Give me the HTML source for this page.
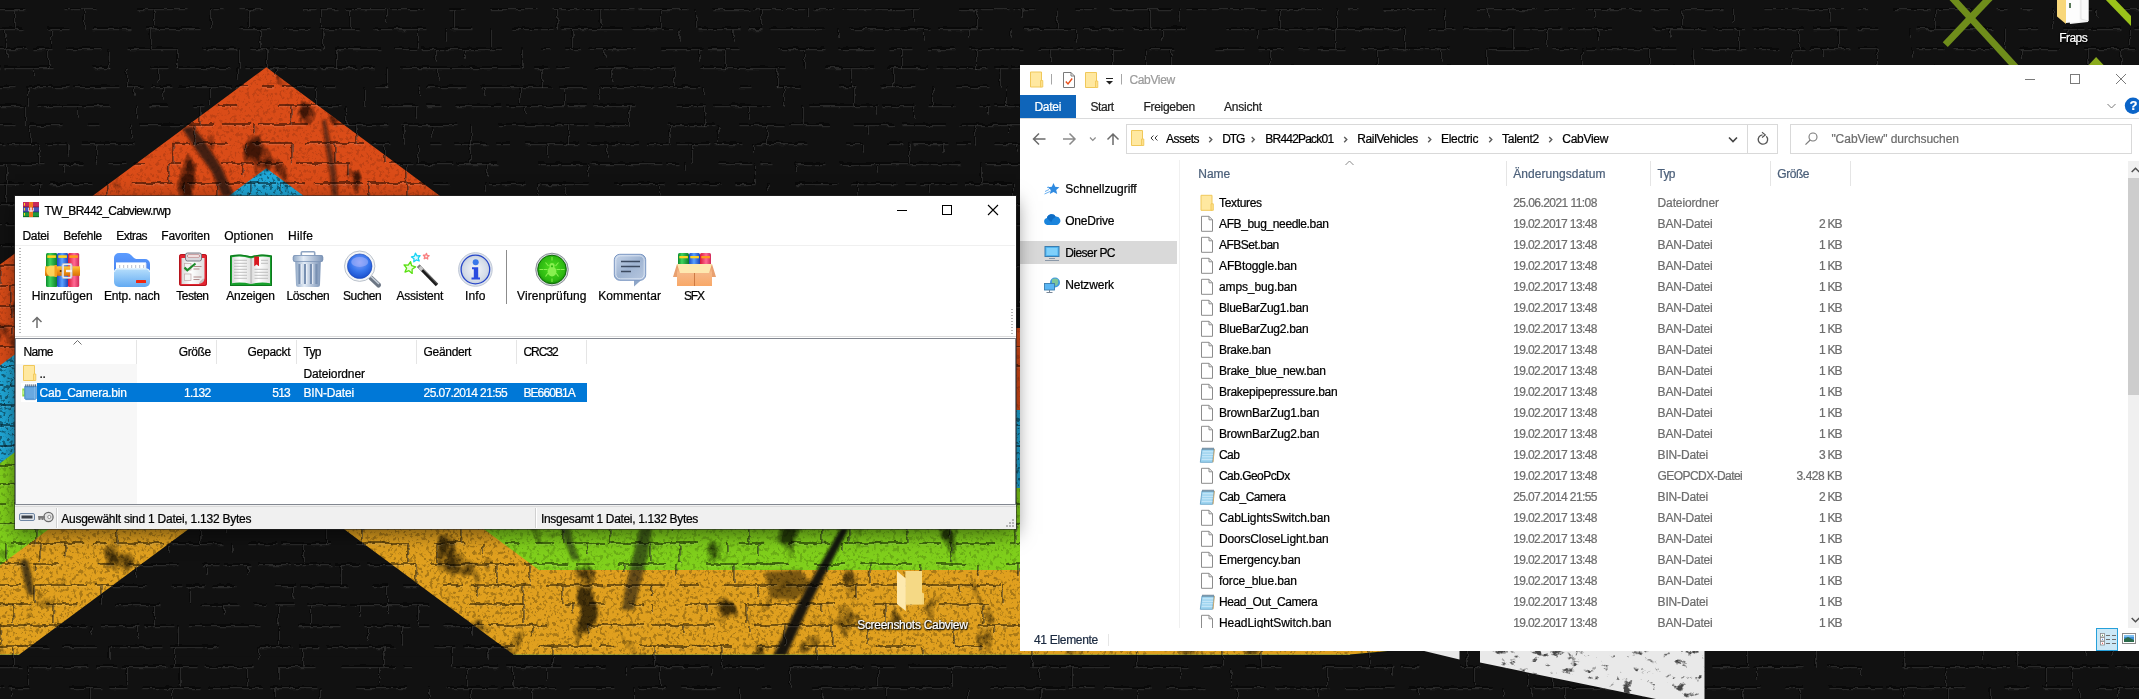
<!DOCTYPE html>
<html lang="de"><head><meta charset="utf-8"><title>Desktop</title>
<style>
html,body{margin:0;padding:0;background:#0f0f0f;}
body{width:2139px;height:699px;overflow:hidden;position:relative;font-family:"Liberation Sans", sans-serif;}
.a{position:absolute;}
.t{position:absolute;white-space:pre;font-family:"Liberation Sans", sans-serif;-webkit-text-stroke:.22px currentColor;}
svg{position:absolute;overflow:visible;}
</style></head><body>
<svg class="a" style="left:0;top:0" width="2139" height="699" viewBox="0 0 2139 699">
<defs>
<filter id="blot" x="0" y="0" width="100%" height="100%" color-interpolation-filters="sRGB">
 <feTurbulence type="fractalNoise" baseFrequency="0.03 0.022" numOctaves="5" seed="7" result="n"/>
 <feColorMatrix in="n" type="matrix" values="0 0 0 0 0  0 0 0 0 0  0 0 0 0 0  4.5 3.5 0 0 -4.75" result="a"/>
 <feComposite in="a" in2="SourceGraphic" operator="in"/>
</filter>
<filter id="wob" x="0" y="0" width="100%" height="100%">
 <feTurbulence type="fractalNoise" baseFrequency="0.11 0.13" numOctaves="2" seed="9" result="n"/>
 <feDisplacementMap in="SourceGraphic" in2="n" scale="5" xChannelSelector="R" yChannelSelector="G"/>
</filter>
<filter id="grain" x="0" y="0" width="100%" height="100%" color-interpolation-filters="sRGB">
 <feTurbulence type="fractalNoise" baseFrequency="0.3 0.27" numOctaves="3" seed="21" result="n"/>
 <feColorMatrix in="n" type="matrix" values="0 0 0 0 0  0 0 0 0 0  0 0 0 0 0  6 5 0 0 -5.75" result="a"/>
 <feComposite in="a" in2="SourceGraphic" operator="in"/>
</filter>
<filter id="blur3"><feGaussianBlur stdDeviation="1.6"/></filter>
<clipPath id="wclip"><path d="M1480 645V662.5L1656 699H1704.5V645Z"/></clipPath>
<filter id="blot2" x="0" y="0" width="100%" height="100%" color-interpolation-filters="sRGB">
 <feTurbulence type="fractalNoise" baseFrequency="0.09 0.12" numOctaves="4" seed="4" result="n"/>
 <feColorMatrix in="n" type="matrix" values="0 0 0 0 0  0 0 0 0 0  0 0 0 0 0  6 5 0 0 -6.3" result="a"/>
 <feComposite in="a" in2="SourceGraphic" operator="in"/>
</filter>
<clipPath id="bands"><polygon points="0.0,264.5 266.3,67.2 618.3,328.0 1392.0,328.0 1352.0,654.5 0.0,654.5"/></clipPath>
</defs>
<rect width="2139" height="699" fill="#111"/>
<clipPath id="co"><polygon points="0.0,264.5 266.3,67.2 618.3,328.0 1392.0,328.0 1392.0,654.5 0.0,654.5"/></clipPath><polygon points="0.0,264.5 266.3,67.2 618.3,328.0 1392.0,328.0 1392.0,654.5 0.0,654.5" fill="#da4c18"/><g clip-path="url(#co)"><rect width="1400" height="699" fill="#000" filter="url(#grain)" opacity="0.12"/></g>
<clipPath id="cb"><polygon points="0.0,365.5 266.3,168.2 592.6,410.0 1392.0,410.0 1392.0,654.5 0.0,654.5"/></clipPath><polygon points="0.0,365.5 266.3,168.2 592.6,410.0 1392.0,410.0 1392.0,654.5 0.0,654.5" fill="#20a8d8"/><g clip-path="url(#cb)"><rect width="1400" height="699" fill="#000" filter="url(#grain)" opacity="0.4"/></g>
<clipPath id="cg"><polygon points="0.0,463.3 266.3,266.0 565.9,488.0 1392.0,488.0 1392.0,654.5 0.0,654.5"/></clipPath><polygon points="0.0,463.3 266.3,266.0 565.9,488.0 1392.0,488.0 1392.0,654.5 0.0,654.5" fill="#80d01c"/><g clip-path="url(#cg)"><rect width="1400" height="699" fill="#000" filter="url(#grain)" opacity="0.16"/></g>
<clipPath id="cy"><polygon points="0.0,565.3 266.3,368.0 538.9,570.0 1392.0,570.0 1392.0,651.0 1350.0,654.5 0.0,654.5"/></clipPath><polygon points="0.0,565.3 266.3,368.0 538.9,570.0 1392.0,570.0 1392.0,651.0 1350.0,654.5 0.0,654.5" fill="#e0a01f"/><g clip-path="url(#cy)"><rect width="1400" height="699" fill="#000" filter="url(#grain)" opacity="0.24"/></g>
<g clip-path="url(#bands)"><rect width="1400" height="699" fill="#000" filter="url(#blot)" opacity=".7"/>
<g filter="url(#blur3)" fill="#0c0c0c">
<path d="M841 528L800 600L773 656L786 656L812 600L849 528Z" opacity=".95"/><path d="M765 572L800 570L812 585L795 600L770 598Z" opacity=".45"/>
<path d="M182 128L196 150L212 172L222 196L234 196L222 168L204 140L192 126Z" opacity=".75"/>
<path d="M322 120L326 150L330 175L332 196L338 196L336 170L330 140L326 120Z" opacity=".6"/>
<path d="M640 528L632 560L625 590L622 610L634 610L640 585L648 555L652 528Z" opacity=".6"/>
<path d="M20 560L24 580L28 595L34 595L32 578L28 560Z" opacity=".7"/>
<path d="M560 528L566 545L572 560L580 560L574 545L570 528Z" opacity=".55"/>
</g>
</g>
<polygon points="513.3,654.5 266.3,471.5 19.3,654.5 19.3,656.5 513.3,656.5" fill="#111" />
<polygon points="1350.0,654.5 1393.0,650.5 1393.0,655.5 1350.0,655.5" fill="#111" />
<g filter="url(#wob)"><path d="M-1 8.0h26M65 8.0h32M137 8.0h51M213 8.0h11M238 8.0h25M303 8.0h13M320 8.0h17M345 8.0h40M389 8.0h34M448 8.0h16M489 8.0h25M514 8.0h23M551 8.0h27M582 8.0h34M620 8.0h14M638 8.0h49M712 8.0h38M754 8.0h18M772 8.0h10M786 8.0h23M813 8.0h20M841 8.0h30M875 8.0h44M959 8.0h50M1013 8.0h21M1074 8.0h22M1110 8.0h29M1139 8.0h33M1186 8.0h20M1210 8.0h26M1236 8.0h31M1275 8.0h48M1348 8.0h10M1383 8.0h53M1476 8.0h31M1507 8.0h29M1544 8.0h29M1587 8.0h54M1649 8.0h21M1684 8.0h40M1764 8.0h21M1785 8.0h26M1811 8.0h32M1857 8.0h11M1893 8.0h36M1937 8.0h34M1996 8.0h10M2020 8.0h12M2072 8.0h21M2118 8.0h22M15 8.0v19M84 8.0v19M154 8.0v19M211 8.0v19M249 8.0v19M321 8.0v19M350 8.0v19M386 8.0v12M454 8.0v19M557 8.0v19M600 8.0v19M660 8.0v19M696 8.0v19M761 8.0v19M808 8.0v8M913 8.0v12M977 8.0v19M1022 8.0v8M1057 8.0v19M1150 8.0v19M1179 8.0v12M1280 8.0v19M1337 8.0v19M1445 8.0v19M1488 8.0v8M1594 8.0v8M1682 8.0v19M1733 8.0v12M1830 8.0v12M1935 8.0v19M1973 8.0v12M2053 8.0v19M2097 8.0v8M-16 28.0h39M48 28.0h20M93 28.0h39M146 28.0h54M240 28.0h30M284 28.0h27M319 28.0h40M373 28.0h19M392 28.0h34M451 28.0h21M512 28.0h41M561 28.0h21M582 28.0h41M631 28.0h42M698 28.0h42M748 28.0h14M770 28.0h54M849 28.0h52M901 28.0h29M938 28.0h45M1023 28.0h52M1083 28.0h41M1132 28.0h54M1226 28.0h28M1262 28.0h51M1317 28.0h47M1364 28.0h40M1429 28.0h26M1463 28.0h52M1523 28.0h39M1570 28.0h42M1652 28.0h53M1713 28.0h32M1753 28.0h51M1812 28.0h36M1856 28.0h21M1917 28.0h38M1963 28.0h31M2019 28.0h19M2063 28.0h20M2087 28.0h33M2134 28.0h28M5 28.0v19M51 28.0v19M150 28.0v19M260 28.0v19M323 28.0v19M418 28.0v19M446 28.0v12M491 28.0v19M572 28.0v19M680 28.0v12M733 28.0v12M838 28.0v8M923 28.0v12M969 28.0v8M1011 28.0v8M1076 28.0v12M1162 28.0v12M1257 28.0v8M1335 28.0v19M1404 28.0v19M1513 28.0v19M1547 28.0v19M1598 28.0v12M1670 28.0v8M1739 28.0v19M1799 28.0v19M1838 28.0v19M1910 28.0v8M2005 28.0v19M2068 28.0v8M2130 28.0v19M-2 48.0h28M34 48.0h18M66 48.0h36M127 48.0h51M203 48.0h33M250 48.0h19M273 48.0h48M335 48.0h46M395 48.0h22M421 48.0h48M469 48.0h32M541 48.0h10M565 48.0h16M589 48.0h46M660 48.0h44M708 48.0h30M778 48.0h46M838 48.0h37M889 48.0h24M927 48.0h28M969 48.0h55M1038 48.0h34M1076 48.0h48M1149 48.0h26M1215 48.0h29M1258 48.0h26M1298 48.0h11M1317 48.0h29M1360 48.0h28M1392 48.0h40M1432 48.0h17M1489 48.0h49M1552 48.0h25M1585 48.0h12M1601 48.0h35M1636 48.0h40M1701 48.0h45M1754 48.0h25M1793 48.0h12M1809 48.0h41M1858 48.0h19M1917 48.0h28M1953 48.0h41M2019 48.0h40M2084 48.0h51M7 48.0v8M48 48.0v19M109 48.0v19M177 48.0v19M239 48.0v19M267 48.0v19M336 48.0v19M436 48.0v12M465 48.0v8M522 48.0v19M605 48.0v8M699 48.0v12M725 48.0v19M804 48.0v19M902 48.0v19M976 48.0v19M1051 48.0v12M1113 48.0v19M1146 48.0v19M1171 48.0v19M1270 48.0v19M1377 48.0v19M1441 48.0v12M1487 48.0v19M1582 48.0v19M1649 48.0v19M1693 48.0v19M1792 48.0v19M1823 48.0v8M1877 48.0v19M1912 48.0v8M2021 48.0v8M2088 48.0v19M2121 48.0v19M-17 67.0h17M4 67.0h49M93 67.0h17M150 67.0h18M176 67.0h55M245 67.0h19M268 67.0h49M321 67.0h36M361 67.0h14M400 67.0h23M423 67.0h45M468 67.0h52M534 67.0h14M556 67.0h13M594 67.0h46M640 67.0h35M700 67.0h18M718 67.0h37M755 67.0h30M825 67.0h48M887 67.0h41M936 67.0h51M995 67.0h13M1012 67.0h54M1074 67.0h19M1118 67.0h50M1208 67.0h42M1258 67.0h45M1328 67.0h49M1381 67.0h26M1407 67.0h45M1456 67.0h26M1490 67.0h43M1537 67.0h25M1570 67.0h39M1649 67.0h34M1687 67.0h18M1745 67.0h11M1796 67.0h31M1827 67.0h46M1913 67.0h12M1925 67.0h17M1967 67.0h48M2029 67.0h25M2068 67.0h39M2121 67.0h30M33 67.0v8M127 67.0v19M158 67.0v12M237 67.0v12M276 67.0v8M386 67.0v19M438 67.0v12M542 67.0v19M612 67.0v12M674 67.0v19M777 67.0v19M851 67.0v19M893 67.0v19M1000 67.0v19M1105 67.0v19M1176 67.0v19M1205 67.0v19M1303 67.0v12M1351 67.0v19M1384 67.0v8M1413 67.0v8M1461 67.0v12M1511 67.0v8M1598 67.0v19M1707 67.0v19M1732 67.0v19M1817 67.0v19M1921 67.0v19M1987 67.0v19M2071 67.0v8M2120 67.0v12M-18 86.0h33M29 86.0h40M73 86.0h45M126 86.0h17M151 86.0h20M179 86.0h53M236 86.0h12M262 86.0h12M282 86.0h33M323 86.0h13M376 86.0h11M427 86.0h39M480 86.0h19M499 86.0h52M559 86.0h28M601 86.0h53M658 86.0h20M678 86.0h22M740 86.0h11M776 86.0h24M840 86.0h15M880 86.0h35M955 86.0h33M1028 86.0h29M1061 86.0h39M1108 86.0h28M1136 86.0h55M1205 86.0h20M1229 86.0h21M1290 86.0h23M1313 86.0h51M1389 86.0h37M1466 86.0h27M1493 86.0h39M1532 86.0h38M1610 86.0h36M1650 86.0h12M1662 86.0h45M1732 86.0h46M1786 86.0h16M1842 86.0h14M1860 86.0h41M1901 86.0h40M1941 86.0h53M1998 86.0h51M2049 86.0h41M2104 86.0h13M2117 86.0h26M28 86.0v19M134 86.0v8M163 86.0v12M210 86.0v19M316 86.0v19M365 86.0v19M419 86.0v8M484 86.0v8M520 86.0v19M565 86.0v19M599 86.0v12M703 86.0v8M784 86.0v19M854 86.0v19M933 86.0v19M1006 86.0v19M1111 86.0v12M1137 86.0v19M1219 86.0v12M1314 86.0v8M1356 86.0v19M1442 86.0v8M1500 86.0v19M1565 86.0v12M1606 86.0v19M1641 86.0v19M1697 86.0v8M1776 86.0v19M1886 86.0v12M1946 86.0v8M2034 86.0v12M2065 86.0v12M2126 86.0v19M-7 105.0h30M37 105.0h45M82 105.0h28M150 105.0h18M193 105.0h11M218 105.0h19M277 105.0h51M328 105.0h13M381 105.0h37M426 105.0h16M456 105.0h45M505 105.0h30M535 105.0h29M568 105.0h18M594 105.0h41M675 105.0h30M713 105.0h12M725 105.0h44M809 105.0h45M854 105.0h11M865 105.0h13M882 105.0h32M928 105.0h26M979 105.0h11M994 105.0h43M1051 105.0h18M1077 105.0h22M1107 105.0h32M1139 105.0h20M1184 105.0h49M1237 105.0h16M1261 105.0h43M1329 105.0h20M1389 105.0h55M1448 105.0h38M1500 105.0h37M1537 105.0h31M1576 105.0h38M1618 105.0h39M1682 105.0h37M1723 105.0h38M1761 105.0h52M1817 105.0h44M1875 105.0h41M1941 105.0h10M1951 105.0h18M1983 105.0h53M2036 105.0h23M2059 105.0h12M2096 105.0h25M2135 105.0h55M25 105.0v19M77 105.0v12M137 105.0v12M200 105.0v19M291 105.0v19M346 105.0v19M416 105.0v12M525 105.0v8M629 105.0v19M705 105.0v19M748 105.0v12M803 105.0v19M876 105.0v8M913 105.0v12M988 105.0v8M1049 105.0v12M1115 105.0v19M1200 105.0v19M1304 105.0v8M1354 105.0v19M1380 105.0v8M1470 105.0v19M1570 105.0v19M1618 105.0v19M1645 105.0v19M1673 105.0v19M1737 105.0v19M1811 105.0v19M1896 105.0v19M1972 105.0v19M2071 105.0v19M-3 124.0h19M30 124.0h33M88 124.0h11M139 124.0h43M186 124.0h28M222 124.0h14M236 124.0h15M259 124.0h49M333 124.0h55M402 124.0h29M431 124.0h27M498 124.0h25M523 124.0h12M535 124.0h52M595 124.0h32M667 124.0h48M740 124.0h45M789 124.0h40M854 124.0h15M869 124.0h25M902 124.0h44M960 124.0h35M995 124.0h52M1061 124.0h34M1099 124.0h51M1175 124.0h23M1238 124.0h49M1295 124.0h34M1337 124.0h16M1393 124.0h45M1478 124.0h55M1541 124.0h25M1566 124.0h23M1597 124.0h29M1634 124.0h49M1683 124.0h20M1703 124.0h50M1767 124.0h21M1792 124.0h51M1843 124.0h46M1914 124.0h50M2004 124.0h44M2088 124.0h36M2138 124.0h24M30 124.0v19M131 124.0v12M194 124.0v19M254 124.0v8M356 124.0v19M404 124.0v19M432 124.0v12M471 124.0v19M568 124.0v19M670 124.0v19M718 124.0v19M767 124.0v19M868 124.0v8M975 124.0v19M1009 124.0v8M1096 124.0v12M1187 124.0v8M1252 124.0v12M1336 124.0v19M1390 124.0v19M1476 124.0v8M1501 124.0v12M1546 124.0v8M1582 124.0v19M1626 124.0v19M1729 124.0v8M1827 124.0v19M1893 124.0v12M1988 124.0v19M2093 124.0v8M-18 143.0h22M8 143.0h30M46 143.0h21M81 143.0h53M174 143.0h15M193 143.0h35M253 143.0h39M306 143.0h10M316 143.0h48M372 143.0h18M430 143.0h10M454 143.0h34M496 143.0h14M524 143.0h55M587 143.0h11M598 143.0h40M646 143.0h22M676 143.0h34M714 143.0h28M756 143.0h51M847 143.0h15M887 143.0h17M912 143.0h36M956 143.0h14M995 143.0h37M1032 143.0h24M1070 143.0h25M1103 143.0h52M1195 143.0h14M1213 143.0h27M1240 143.0h45M1299 143.0h37M1340 143.0h44M1398 143.0h25M1423 143.0h38M1469 143.0h18M1487 143.0h10M1501 143.0h33M1534 143.0h11M1553 143.0h45M1612 143.0h34M1671 143.0h15M1686 143.0h23M1713 143.0h38M1751 143.0h40M1816 143.0h15M1839 143.0h48M1927 143.0h40M1992 143.0h11M2003 143.0h20M2037 143.0h42M2093 143.0h47M39 143.0v19M68 143.0v12M96 143.0v19M173 143.0v19M246 143.0v8M292 143.0v19M335 143.0v19M384 143.0v19M418 143.0v19M470 143.0v19M548 143.0v12M607 143.0v12M692 143.0v19M753 143.0v8M863 143.0v8M909 143.0v19M943 143.0v8M1016 143.0v8M1093 143.0v12M1143 143.0v8M1231 143.0v19M1332 143.0v19M1374 143.0v19M1429 143.0v8M1500 143.0v19M1528 143.0v8M1576 143.0v19M1611 143.0v19M1652 143.0v19M1719 143.0v12M1763 143.0v19M1854 143.0v19M1890 143.0v19M1929 143.0v8M2036 143.0v19M2108 143.0v19M-3 163.0h47M58 163.0h25M108 163.0h18M134 163.0h11M170 163.0h10M220 163.0h34M258 163.0h25M297 163.0h52M389 163.0h13M402 163.0h10M416 163.0h36M456 163.0h42M538 163.0h49M591 163.0h29M620 163.0h42M666 163.0h12M718 163.0h34M760 163.0h11M796 163.0h29M839 163.0h38M877 163.0h51M928 163.0h33M986 163.0h43M1037 163.0h55M1117 163.0h48M1179 163.0h34M1221 163.0h20M1266 163.0h53M1319 163.0h51M1384 163.0h13M1437 163.0h23M1485 163.0h49M1548 163.0h16M1589 163.0h29M1643 163.0h33M1690 163.0h18M1722 163.0h32M1754 163.0h41M1795 163.0h46M1866 163.0h23M1914 163.0h39M1953 163.0h13M2006 163.0h15M2021 163.0h31M2056 163.0h33M2097 163.0h26M2131 163.0h40M7 163.0v19M64 163.0v8M169 163.0v19M243 163.0v12M348 163.0v12M406 163.0v19M487 163.0v12M588 163.0v12M685 163.0v8M755 163.0v19M795 163.0v8M878 163.0v8M981 163.0v19M1089 163.0v8M1117 163.0v19M1194 163.0v8M1271 163.0v19M1374 163.0v19M1477 163.0v19M1530 163.0v19M1569 163.0v8M1669 163.0v8M1699 163.0v8M1782 163.0v19M1890 163.0v19M1984 163.0v8M2091 163.0v19M2131 163.0v19M-6 183.0h29M31 183.0h10M49 183.0h43M132 183.0h41M187 183.0h34M225 183.0h51M280 183.0h26M314 183.0h49M367 183.0h39M406 183.0h19M433 183.0h15M488 183.0h37M539 183.0h49M613 183.0h51M678 183.0h21M703 183.0h18M735 183.0h20M795 183.0h42M851 183.0h46M905 183.0h11M920 183.0h37M965 183.0h46M1025 183.0h42M1092 183.0h23M1140 183.0h25M1205 183.0h20M1239 183.0h45M1292 183.0h30M1330 183.0h49M1379 183.0h22M1409 183.0h37M1454 183.0h43M1505 183.0h41M1586 183.0h55M1681 183.0h15M1696 183.0h54M1750 183.0h31M1781 183.0h16M1837 183.0h28M1890 183.0h21M1911 183.0h44M1969 183.0h21M2030 183.0h31M2101 183.0h26M2127 183.0h36M6 183.0v19M39 183.0v19M107 183.0v19M184 183.0v8M217 183.0v19M250 183.0v12M280 183.0v8M369 183.0v19M407 183.0v19M485 183.0v8M538 183.0v19M566 183.0v19M660 183.0v19M768 183.0v8M858 183.0v19M929 183.0v8M1013 183.0v19M1051 183.0v12M1107 183.0v8M1210 183.0v19M1247 183.0v8M1355 183.0v19M1428 183.0v19M1467 183.0v19M1531 183.0v19M1614 183.0v19M1644 183.0v12M1734 183.0v12M1807 183.0v12M1856 183.0v19M1948 183.0v8M1990 183.0v19M2021 183.0v19M2085 183.0v19M0 204.0h42M50 204.0h28M82 204.0h50M140 204.0h39M193 204.0h35M268 204.0h48M316 204.0h18M359 204.0h22M395 204.0h54M489 204.0h16M519 204.0h24M547 204.0h25M576 204.0h51M627 204.0h38M673 204.0h49M736 204.0h53M793 204.0h54M861 204.0h16M885 204.0h47M940 204.0h50M998 204.0h54M1052 204.0h44M1136 204.0h45M1181 204.0h23M1204 204.0h31M1260 204.0h47M1321 204.0h50M1385 204.0h43M1453 204.0h28M1506 204.0h31M1537 204.0h28M1569 204.0h43M1626 204.0h28M1668 204.0h33M1705 204.0h28M1773 204.0h22M1835 204.0h12M1847 204.0h41M1892 204.0h29M1935 204.0h52M1995 204.0h36M2056 204.0h53M2123 204.0h31M33 204.0v19M99 204.0v19M125 204.0v12M223 204.0v19M331 204.0v8M424 204.0v19M508 204.0v19M538 204.0v12M631 204.0v8M717 204.0v8M767 204.0v12M813 204.0v19M868 204.0v19M976 204.0v8M1050 204.0v19M1157 204.0v12M1264 204.0v19M1290 204.0v12M1399 204.0v12M1498 204.0v8M1587 204.0v19M1667 204.0v19M1731 204.0v12M1768 204.0v19M1864 204.0v19M1959 204.0v19M1991 204.0v19M2083 204.0v8M2126 204.0v19M-20 224.0h22M6 224.0h16M26 224.0h39M79 224.0h40M133 224.0h28M186 224.0h14M200 224.0h54M279 224.0h49M342 224.0h49M416 224.0h48M504 224.0h49M557 224.0h11M608 224.0h38M671 224.0h22M693 224.0h54M755 224.0h22M777 224.0h44M829 224.0h15M848 224.0h24M886 224.0h10M896 224.0h37M933 224.0h29M966 224.0h34M1014 224.0h20M1034 224.0h34M1108 224.0h22M1134 224.0h18M1166 224.0h38M1208 224.0h36M1244 224.0h27M1285 224.0h43M1332 224.0h54M1426 224.0h53M1487 224.0h15M1506 224.0h37M1557 224.0h52M1649 224.0h45M1734 224.0h38M1812 224.0h22M1838 224.0h30M1893 224.0h26M1959 224.0h53M2012 224.0h22M2059 224.0h20M2087 224.0h50M2137 224.0h55M27 224.0v19M70 224.0v19M118 224.0v8M212 224.0v12M291 224.0v8M316 224.0v19M400 224.0v19M435 224.0v19M479 224.0v19M504 224.0v8M606 224.0v19M692 224.0v19M790 224.0v19M857 224.0v19M950 224.0v19M996 224.0v19M1075 224.0v19M1156 224.0v8M1210 224.0v19M1272 224.0v8M1362 224.0v8M1455 224.0v19M1508 224.0v8M1618 224.0v19M1683 224.0v8M1718 224.0v19M1795 224.0v12M1861 224.0v19M1891 224.0v19M1996 224.0v8M2087 224.0v8M0 245.0h15M15 245.0h41M81 245.0h40M125 245.0h38M171 245.0h19M204 245.0h27M256 245.0h38M319 245.0h14M373 245.0h43M420 245.0h28M448 245.0h47M503 245.0h14M531 245.0h28M573 245.0h16M593 245.0h32M665 245.0h37M702 245.0h31M737 245.0h32M809 245.0h16M839 245.0h30M869 245.0h41M918 245.0h12M970 245.0h38M1048 245.0h13M1086 245.0h24M1118 245.0h29M1155 245.0h39M1219 245.0h43M1270 245.0h42M1337 245.0h15M1377 245.0h46M1437 245.0h36M1513 245.0h22M1560 245.0h35M1609 245.0h17M1630 245.0h14M1658 245.0h30M1688 245.0h29M1725 245.0h36M1786 245.0h47M1833 245.0h21M1854 245.0h38M1896 245.0h29M1925 245.0h46M1971 245.0h47M2058 245.0h13M2071 245.0h15M2094 245.0h50M18 245.0v19M127 245.0v12M156 245.0v19M239 245.0v19M284 245.0v19M376 245.0v19M473 245.0v19M557 245.0v19M641 245.0v8M688 245.0v19M773 245.0v19M877 245.0v8M916 245.0v19M975 245.0v19M1043 245.0v8M1117 245.0v19M1199 245.0v19M1240 245.0v12M1334 245.0v19M1404 245.0v19M1452 245.0v12M1529 245.0v8M1605 245.0v19M1662 245.0v12M1766 245.0v12M1846 245.0v19M1937 245.0v19M1977 245.0v19M2050 245.0v8M2099 245.0v12M-13 265.0h54M55 265.0h47M142 265.0h42M184 265.0h17M226 265.0h29M255 265.0h31M294 265.0h49M351 265.0h20M371 265.0h12M387 265.0h41M428 265.0h27M469 265.0h43M516 265.0h12M532 265.0h31M571 265.0h24M603 265.0h39M642 265.0h12M694 265.0h17M715 265.0h16M771 265.0h29M800 265.0h25M825 265.0h50M875 265.0h47M930 265.0h31M969 265.0h36M1009 265.0h27M1044 265.0h14M1072 265.0h21M1097 265.0h41M1138 265.0h29M1181 265.0h24M1205 265.0h45M1254 265.0h34M1328 265.0h46M1374 265.0h28M1416 265.0h12M1468 265.0h26M1494 265.0h39M1537 265.0h17M1594 265.0h15M1613 265.0h30M1651 265.0h25M1701 265.0h41M1742 265.0h54M1836 265.0h10M1871 265.0h30M1926 265.0h35M1969 265.0h30M2007 265.0h50M2061 265.0h47M2116 265.0h38M0 265.0v19M99 265.0v12M153 265.0v8M250 265.0v19M286 265.0v12M341 265.0v12M415 265.0v19M467 265.0v19M509 265.0v12M555 265.0v8M657 265.0v19M760 265.0v19M847 265.0v12M928 265.0v19M985 265.0v8M1086 265.0v12M1186 265.0v19M1280 265.0v8M1386 265.0v19M1483 265.0v19M1574 265.0v8M1637 265.0v8M1733 265.0v12M1835 265.0v12M1943 265.0v19M2016 265.0v19M2101 265.0v19M-10 286.0h18M12 286.0h38M75 286.0h45M160 286.0h22M222 286.0h16M263 286.0h11M288 286.0h21M317 286.0h44M361 286.0h22M391 286.0h55M450 286.0h27M491 286.0h27M518 286.0h50M576 286.0h29M645 286.0h17M687 286.0h25M712 286.0h48M764 286.0h27M805 286.0h38M851 286.0h14M879 286.0h35M928 286.0h19M961 286.0h52M1053 286.0h40M1118 286.0h13M1145 286.0h49M1219 286.0h12M1235 286.0h42M1317 286.0h26M1351 286.0h42M1433 286.0h21M1462 286.0h37M1524 286.0h49M1613 286.0h52M1669 286.0h34M1743 286.0h55M1838 286.0h24M1887 286.0h49M1961 286.0h52M2013 286.0h28M2045 286.0h36M2095 286.0h40M11 286.0v19M97 286.0v19M178 286.0v19M233 286.0v12M299 286.0v12M342 286.0v8M382 286.0v19M490 286.0v19M584 286.0v8M627 286.0v8M714 286.0v19M756 286.0v8M786 286.0v8M865 286.0v19M913 286.0v8M940 286.0v19M1020 286.0v19M1130 286.0v19M1236 286.0v19M1289 286.0v12M1377 286.0v19M1465 286.0v19M1531 286.0v8M1631 286.0v19M1657 286.0v19M1687 286.0v12M1736 286.0v19M1793 286.0v19M1856 286.0v12M1966 286.0v12M2047 286.0v8M-5 306.0h24M27 306.0h36M71 306.0h23M102 306.0h37M139 306.0h30M169 306.0h19M192 306.0h30M230 306.0h25M263 306.0h25M296 306.0h16M352 306.0h45M411 306.0h26M437 306.0h44M506 306.0h50M564 306.0h12M580 306.0h52M632 306.0h16M662 306.0h29M695 306.0h44M743 306.0h30M781 306.0h21M802 306.0h37M879 306.0h37M930 306.0h10M940 306.0h26M991 306.0h55M1060 306.0h15M1075 306.0h10M1093 306.0h29M1147 306.0h39M1190 306.0h50M1244 306.0h33M1302 306.0h29M1339 306.0h15M1368 306.0h37M1430 306.0h10M1454 306.0h40M1502 306.0h40M1542 306.0h29M1596 306.0h14M1614 306.0h37M1651 306.0h16M1692 306.0h25M1757 306.0h42M1824 306.0h34M1883 306.0h22M1945 306.0h53M2038 306.0h40M2103 306.0h43M12 306.0v12M40 306.0v8M80 306.0v19M156 306.0v19M182 306.0v19M250 306.0v19M304 306.0v19M392 306.0v19M443 306.0v12M530 306.0v19M587 306.0v8M646 306.0v8M749 306.0v19M844 306.0v19M924 306.0v8M1034 306.0v19M1065 306.0v12M1096 306.0v12M1175 306.0v19M1275 306.0v12M1326 306.0v19M1381 306.0v8M1472 306.0v19M1520 306.0v12M1602 306.0v19M1700 306.0v12M1781 306.0v12M1852 306.0v19M1891 306.0v19M1954 306.0v8M2038 306.0v19M-1 326.0h25M24 326.0h42M74 326.0h52M166 326.0h33M207 326.0h53M285 326.0h12M337 326.0h32M377 326.0h32M413 326.0h24M451 326.0h43M508 326.0h33M566 326.0h27M607 326.0h36M647 326.0h48M699 326.0h55M754 326.0h31M785 326.0h16M805 326.0h37M867 326.0h49M930 326.0h52M1022 326.0h17M1053 326.0h22M1083 326.0h24M1121 326.0h17M1163 326.0h12M1189 326.0h30M1223 326.0h32M1259 326.0h36M1303 326.0h27M1338 326.0h41M1387 326.0h20M1411 326.0h12M1437 326.0h30M1471 326.0h15M1526 326.0h41M1575 326.0h29M1604 326.0h29M1637 326.0h48M1693 326.0h42M1775 326.0h41M1856 326.0h20M1890 326.0h22M1926 326.0h38M1972 326.0h51M2048 326.0h47M2095 326.0h55M12 326.0v8M90 326.0v12M180 326.0v8M278 326.0v19M335 326.0v8M362 326.0v19M432 326.0v19M471 326.0v19M524 326.0v12M623 326.0v19M684 326.0v12M787 326.0v19M832 326.0v12M934 326.0v19M995 326.0v19M1070 326.0v19M1136 326.0v19M1201 326.0v19M1230 326.0v19M1339 326.0v19M1424 326.0v19M1520 326.0v12M1578 326.0v8M1616 326.0v8M1715 326.0v8M1816 326.0v19M1923 326.0v19M1961 326.0v19M2003 326.0v19M2081 326.0v8M-9 347.0h30M61 347.0h46M115 347.0h17M157 347.0h50M232 347.0h22M279 347.0h46M365 347.0h17M396 347.0h18M454 347.0h14M476 347.0h28M508 347.0h50M583 347.0h24M607 347.0h34M641 347.0h18M673 347.0h14M691 347.0h52M757 347.0h54M811 347.0h27M878 347.0h10M888 347.0h47M960 347.0h23M1008 347.0h48M1096 347.0h24M1145 347.0h37M1207 347.0h47M1268 347.0h29M1297 347.0h24M1325 347.0h45M1384 347.0h48M1440 347.0h51M1516 347.0h41M1557 347.0h51M1612 347.0h50M1676 347.0h50M1734 347.0h18M1792 347.0h12M1818 347.0h12M1844 347.0h20M1872 347.0h47M1959 347.0h39M2038 347.0h40M2092 347.0h36M2132 347.0h30M30 347.0v19M70 347.0v8M163 347.0v8M212 347.0v19M294 347.0v12M361 347.0v19M471 347.0v19M506 347.0v19M565 347.0v19M599 347.0v8M633 347.0v8M667 347.0v19M710 347.0v8M759 347.0v19M839 347.0v19M912 347.0v12M1013 347.0v19M1062 347.0v12M1097 347.0v19M1156 347.0v8M1233 347.0v19M1307 347.0v12M1410 347.0v19M1451 347.0v19M1553 347.0v12M1579 347.0v12M1660 347.0v12M1691 347.0v8M1763 347.0v19M1851 347.0v19M1939 347.0v8M2021 347.0v19M2055 347.0v19M2102 347.0v19M-2 366.0h14M52 366.0h11M88 366.0h30M118 366.0h17M149 366.0h10M184 366.0h25M234 366.0h39M273 366.0h54M331 366.0h34M373 366.0h17M390 366.0h17M447 366.0h22M483 366.0h30M521 366.0h24M553 366.0h46M613 366.0h47M664 366.0h25M693 366.0h21M718 366.0h17M775 366.0h47M836 366.0h50M900 366.0h11M951 366.0h27M1003 366.0h40M1047 366.0h10M1061 366.0h11M1097 366.0h37M1138 366.0h19M1171 366.0h26M1201 366.0h31M1257 366.0h16M1313 366.0h30M1351 366.0h22M1381 366.0h51M1457 366.0h52M1549 366.0h33M1586 366.0h37M1663 366.0h20M1697 366.0h25M1730 366.0h13M1747 366.0h53M1825 366.0h45M1878 366.0h26M1908 366.0h17M1939 366.0h14M1953 366.0h43M2000 366.0h26M2066 366.0h33M2107 366.0h13M2134 366.0h24M30 366.0v12M114 366.0v12M208 366.0v12M266 366.0v19M372 366.0v12M481 366.0v19M509 366.0v8M568 366.0v19M646 366.0v12M718 366.0v8M817 366.0v8M901 366.0v19M967 366.0v19M1069 366.0v8M1137 366.0v19M1225 366.0v19M1320 366.0v8M1421 366.0v19M1531 366.0v19M1618 366.0v12M1697 366.0v19M1727 366.0v8M1798 366.0v19M1877 366.0v19M1973 366.0v19M2023 366.0v8M2080 366.0v12M2138 366.0v12M-18 385.0h20M10 385.0h49M59 385.0h18M102 385.0h51M178 385.0h26M244 385.0h47M331 385.0h27M398 385.0h37M435 385.0h34M477 385.0h35M526 385.0h37M567 385.0h50M617 385.0h18M639 385.0h46M693 385.0h24M742 385.0h25M775 385.0h34M813 385.0h39M860 385.0h36M910 385.0h48M962 385.0h27M1029 385.0h32M1061 385.0h42M1111 385.0h20M1171 385.0h35M1206 385.0h53M1299 385.0h50M1374 385.0h48M1447 385.0h34M1481 385.0h45M1551 385.0h28M1583 385.0h11M1619 385.0h51M1684 385.0h42M1730 385.0h11M1755 385.0h41M1796 385.0h51M1855 385.0h31M1890 385.0h25M1955 385.0h38M2018 385.0h10M2036 385.0h20M2070 385.0h16M2100 385.0h50M39 385.0v19M132 385.0v12M228 385.0v19M284 385.0v12M332 385.0v12M379 385.0v19M458 385.0v19M564 385.0v19M619 385.0v12M696 385.0v19M725 385.0v12M772 385.0v19M872 385.0v12M897 385.0v19M948 385.0v19M1052 385.0v19M1155 385.0v8M1196 385.0v19M1253 385.0v12M1289 385.0v19M1356 385.0v12M1389 385.0v19M1441 385.0v19M1490 385.0v19M1578 385.0v19M1612 385.0v19M1655 385.0v19M1688 385.0v12M1724 385.0v8M1759 385.0v19M1838 385.0v19M1891 385.0v12M1976 385.0v19M2063 385.0v8M2138 385.0v19M-13 405.0h40M27 405.0h18M45 405.0h52M105 405.0h32M162 405.0h47M209 405.0h38M287 405.0h45M346 405.0h24M384 405.0h15M424 405.0h45M494 405.0h50M558 405.0h25M591 405.0h37M642 405.0h23M669 405.0h32M709 405.0h46M759 405.0h22M795 405.0h43M878 405.0h14M900 405.0h50M975 405.0h37M1037 405.0h28M1069 405.0h44M1121 405.0h54M1183 405.0h26M1217 405.0h53M1295 405.0h46M1349 405.0h22M1411 405.0h13M1438 405.0h18M1496 405.0h34M1555 405.0h29M1588 405.0h10M1606 405.0h30M1640 405.0h18M1666 405.0h36M1706 405.0h31M1751 405.0h25M1780 405.0h46M1834 405.0h41M1879 405.0h43M1926 405.0h51M1991 405.0h53M2044 405.0h19M2103 405.0h48M19 405.0v19M128 405.0v8M238 405.0v8M298 405.0v19M366 405.0v12M445 405.0v12M472 405.0v19M540 405.0v12M631 405.0v19M706 405.0v8M752 405.0v19M816 405.0v19M851 405.0v8M898 405.0v19M936 405.0v8M963 405.0v8M1031 405.0v19M1111 405.0v19M1204 405.0v19M1294 405.0v19M1365 405.0v19M1442 405.0v8M1502 405.0v8M1548 405.0v12M1621 405.0v19M1690 405.0v8M1741 405.0v12M1838 405.0v8M1888 405.0v19M1930 405.0v19M1993 405.0v19M2055 405.0v8M2136 405.0v12M-16 425.0h32M20 425.0h46M70 425.0h38M148 425.0h20M172 425.0h51M248 425.0h48M321 425.0h41M376 425.0h42M458 425.0h18M480 425.0h24M529 425.0h19M588 425.0h49M645 425.0h44M714 425.0h24M746 425.0h44M804 425.0h43M851 425.0h12M903 425.0h21M949 425.0h50M1007 425.0h41M1062 425.0h13M1115 425.0h27M1167 425.0h27M1208 425.0h29M1277 425.0h13M1290 425.0h15M1345 425.0h24M1373 425.0h22M1409 425.0h27M1440 425.0h20M1464 425.0h22M1494 425.0h21M1529 425.0h39M1568 425.0h32M1604 425.0h17M1661 425.0h20M1721 425.0h50M1779 425.0h54M1858 425.0h35M1897 425.0h36M1973 425.0h25M2038 425.0h46M2109 425.0h46M29 425.0v19M85 425.0v19M119 425.0v8M162 425.0v19M258 425.0v12M300 425.0v19M351 425.0v19M431 425.0v19M475 425.0v12M557 425.0v19M625 425.0v8M685 425.0v19M749 425.0v19M829 425.0v19M866 425.0v8M959 425.0v19M1028 425.0v19M1095 425.0v8M1134 425.0v12M1228 425.0v19M1313 425.0v19M1365 425.0v8M1395 425.0v19M1444 425.0v12M1533 425.0v12M1600 425.0v8M1627 425.0v8M1662 425.0v8M1732 425.0v19M1810 425.0v19M1850 425.0v8M1929 425.0v19M2018 425.0v19M2050 425.0v19M-20 446.0h11M-1 446.0h33M72 446.0h21M107 446.0h32M164 446.0h30M202 446.0h17M244 446.0h25M277 446.0h20M337 446.0h37M378 446.0h49M431 446.0h42M487 446.0h26M521 446.0h38M573 446.0h49M647 446.0h36M691 446.0h54M753 446.0h42M803 446.0h29M857 446.0h48M909 446.0h52M969 446.0h23M1006 446.0h22M1042 446.0h50M1092 446.0h29M1129 446.0h47M1201 446.0h40M1249 446.0h50M1313 446.0h48M1401 446.0h42M1457 446.0h47M1544 446.0h27M1596 446.0h53M1674 446.0h37M1736 446.0h55M1799 446.0h32M1871 446.0h22M1933 446.0h41M2014 446.0h41M2063 446.0h10M2073 446.0h18M2099 446.0h39M25 446.0v8M125 446.0v19M175 446.0v8M219 446.0v12M299 446.0v12M365 446.0v19M407 446.0v19M483 446.0v12M538 446.0v19M639 446.0v8M734 446.0v19M762 446.0v19M857 446.0v19M947 446.0v19M1025 446.0v19M1055 446.0v19M1140 446.0v8M1190 446.0v19M1224 446.0v19M1291 446.0v12M1328 446.0v19M1413 446.0v12M1505 446.0v12M1597 446.0v19M1703 446.0v8M1794 446.0v19M1878 446.0v19M1933 446.0v19M1972 446.0v8M2022 446.0v8M2068 446.0v19M2103 446.0v19M-10 465.0h46M40 465.0h53M97 465.0h47M152 465.0h21M177 465.0h25M216 465.0h49M290 465.0h37M331 465.0h39M384 465.0h46M434 465.0h51M525 465.0h14M579 465.0h37M656 465.0h42M723 465.0h13M776 465.0h34M824 465.0h15M843 465.0h41M924 465.0h48M980 465.0h37M1025 465.0h43M1076 465.0h30M1146 465.0h51M1237 465.0h46M1308 465.0h40M1348 465.0h18M1366 465.0h47M1438 465.0h48M1494 465.0h17M1515 465.0h46M1561 465.0h49M1610 465.0h49M1699 465.0h15M1728 465.0h11M1779 465.0h29M1808 465.0h26M1859 465.0h26M1885 465.0h26M1919 465.0h38M1965 465.0h43M2048 465.0h40M2088 465.0h18M2131 465.0h28M34 465.0v19M98 465.0v8M140 465.0v19M225 465.0v8M297 465.0v12M357 465.0v19M414 465.0v19M489 465.0v8M583 465.0v19M631 465.0v19M664 465.0v19M710 465.0v8M788 465.0v19M824 465.0v19M892 465.0v8M999 465.0v8M1030 465.0v19M1099 465.0v19M1189 465.0v19M1266 465.0v8M1307 465.0v12M1368 465.0v19M1468 465.0v12M1505 465.0v19M1582 465.0v12M1615 465.0v19M1686 465.0v8M1718 465.0v19M1753 465.0v8M1781 465.0v19M1823 465.0v8M1865 465.0v12M1928 465.0v19M1981 465.0v12M2012 465.0v8M2096 465.0v19M2130 465.0v19M-2 484.0h48M46 484.0h44M94 484.0h19M153 484.0h14M207 484.0h20M235 484.0h28M303 484.0h23M340 484.0h54M398 484.0h21M433 484.0h37M478 484.0h19M522 484.0h34M581 484.0h39M660 484.0h43M711 484.0h49M800 484.0h22M826 484.0h43M869 484.0h25M934 484.0h22M981 484.0h28M1034 484.0h14M1048 484.0h29M1081 484.0h44M1150 484.0h24M1199 484.0h17M1230 484.0h12M1250 484.0h17M1271 484.0h11M1296 484.0h14M1324 484.0h44M1376 484.0h45M1446 484.0h16M1462 484.0h53M1529 484.0h45M1614 484.0h13M1652 484.0h28M1705 484.0h45M1790 484.0h20M1850 484.0h42M1932 484.0h21M1957 484.0h49M2014 484.0h23M2051 484.0h50M2126 484.0h32M20 484.0v19M117 484.0v19M168 484.0v19M224 484.0v19M278 484.0v12M350 484.0v8M395 484.0v19M453 484.0v8M478 484.0v19M549 484.0v19M616 484.0v12M688 484.0v12M746 484.0v19M850 484.0v12M947 484.0v8M1009 484.0v19M1048 484.0v19M1095 484.0v8M1157 484.0v19M1241 484.0v19M1321 484.0v19M1363 484.0v19M1416 484.0v12M1464 484.0v12M1518 484.0v19M1607 484.0v19M1671 484.0v8M1732 484.0v8M1809 484.0v12M1836 484.0v12M1890 484.0v8M1955 484.0v8M1996 484.0v19M2024 484.0v19M2068 484.0v19M2125 484.0v8M-4 503.0h10M14 503.0h10M24 503.0h21M70 503.0h39M117 503.0h25M150 503.0h13M203 503.0h31M242 503.0h49M295 503.0h37M372 503.0h52M432 503.0h15M472 503.0h41M517 503.0h20M562 503.0h53M615 503.0h51M706 503.0h46M756 503.0h40M804 503.0h35M864 503.0h47M936 503.0h55M1005 503.0h34M1053 503.0h31M1124 503.0h21M1170 503.0h31M1205 503.0h25M1244 503.0h23M1281 503.0h29M1310 503.0h49M1359 503.0h47M1406 503.0h39M1485 503.0h47M1532 503.0h48M1588 503.0h15M1617 503.0h34M1691 503.0h14M1705 503.0h15M1728 503.0h29M1797 503.0h28M1825 503.0h15M1854 503.0h50M1904 503.0h38M1982 503.0h46M2032 503.0h22M2058 503.0h17M2100 503.0h43M25 503.0v19M93 503.0v12M182 503.0v8M292 503.0v19M381 503.0v19M422 503.0v19M464 503.0v19M490 503.0v19M579 503.0v19M678 503.0v19M775 503.0v19M842 503.0v19M928 503.0v19M979 503.0v19M1044 503.0v19M1135 503.0v8M1210 503.0v8M1245 503.0v19M1341 503.0v19M1367 503.0v19M1395 503.0v12M1435 503.0v19M1511 503.0v12M1599 503.0v8M1630 503.0v8M1726 503.0v19M1765 503.0v19M1838 503.0v19M1948 503.0v19M2023 503.0v8M2118 503.0v19M-3 524.0h16M13 524.0h50M77 524.0h12M103 524.0h22M125 524.0h39M168 524.0h26M219 524.0h40M259 524.0h49M308 524.0h22M330 524.0h44M414 524.0h26M444 524.0h49M497 524.0h52M553 524.0h16M583 524.0h10M601 524.0h14M615 524.0h47M702 524.0h23M725 524.0h17M756 524.0h50M846 524.0h37M923 524.0h54M981 524.0h21M1006 524.0h50M1081 524.0h28M1149 524.0h48M1222 524.0h41M1263 524.0h39M1342 524.0h36M1392 524.0h16M1433 524.0h13M1454 524.0h54M1512 524.0h16M1553 524.0h38M1591 524.0h46M1645 524.0h23M1668 524.0h44M1752 524.0h34M1826 524.0h51M1877 524.0h24M1909 524.0h55M1972 524.0h15M2001 524.0h10M2011 524.0h49M2074 524.0h41M36 524.0v19M117 524.0v19M200 524.0v19M226 524.0v8M326 524.0v19M362 524.0v19M461 524.0v19M563 524.0v19M610 524.0v19M673 524.0v8M749 524.0v19M822 524.0v19M849 524.0v19M907 524.0v19M949 524.0v12M1016 524.0v19M1083 524.0v19M1167 524.0v19M1263 524.0v8M1308 524.0v19M1376 524.0v19M1446 524.0v8M1487 524.0v8M1549 524.0v19M1577 524.0v19M1610 524.0v19M1695 524.0v12M1760 524.0v19M1795 524.0v19M1845 524.0v19M1935 524.0v12M2039 524.0v19M2111 524.0v12M-19 543.0h16M11 543.0h15M30 543.0h54M92 543.0h15M115 543.0h49M172 543.0h51M248 543.0h29M281 543.0h50M356 543.0h52M433 543.0h11M448 543.0h17M505 543.0h15M534 543.0h19M567 543.0h38M609 543.0h34M643 543.0h55M738 543.0h25M788 543.0h42M844 543.0h47M891 543.0h15M920 543.0h22M956 543.0h25M981 543.0h15M1010 543.0h47M1082 543.0h25M1121 543.0h12M1158 543.0h27M1193 543.0h53M1271 543.0h17M1296 543.0h17M1338 543.0h38M1390 543.0h50M1444 543.0h48M1492 543.0h48M1554 543.0h19M1573 543.0h26M1607 543.0h14M1661 543.0h29M1690 543.0h42M1757 543.0h47M1829 543.0h53M1886 543.0h21M1921 543.0h46M1975 543.0h47M2036 543.0h54M2090 543.0h42M6 543.0v19M40 543.0v19M65 543.0v12M169 543.0v8M232 543.0v8M303 543.0v19M408 543.0v19M437 543.0v19M483 543.0v12M587 543.0v12M650 543.0v19M680 543.0v19M728 543.0v8M758 543.0v12M842 543.0v8M951 543.0v19M1053 543.0v19M1086 543.0v19M1138 543.0v19M1198 543.0v12M1272 543.0v19M1357 543.0v19M1394 543.0v19M1491 543.0v19M1596 543.0v19M1698 543.0v8M1775 543.0v12M1835 543.0v19M1883 543.0v19M1908 543.0v8M1989 543.0v19M2044 543.0v19M2104 543.0v12M-8 564.0h33M33 564.0h25M98 564.0h16M128 564.0h12M140 564.0h37M202 564.0h17M223 564.0h28M259 564.0h31M294 564.0h38M336 564.0h23M367 564.0h49M430 564.0h37M467 564.0h49M524 564.0h44M576 564.0h17M618 564.0h48M706 564.0h31M741 564.0h48M814 564.0h31M859 564.0h27M886 564.0h25M936 564.0h31M1007 564.0h50M1082 564.0h24M1110 564.0h18M1142 564.0h50M1196 564.0h34M1255 564.0h54M1323 564.0h16M1353 564.0h38M1395 564.0h48M1483 564.0h35M1543 564.0h55M1623 564.0h34M1682 564.0h21M1728 564.0h32M1785 564.0h24M1834 564.0h42M1901 564.0h52M1993 564.0h20M2053 564.0h37M2130 564.0h26M36 564.0v8M136 564.0v12M207 564.0v8M248 564.0v8M341 564.0v19M416 564.0v19M497 564.0v19M530 564.0v19M624 564.0v8M676 564.0v12M734 564.0v19M827 564.0v8M870 564.0v19M920 564.0v8M978 564.0v12M1018 564.0v12M1109 564.0v8M1145 564.0v19M1190 564.0v19M1284 564.0v19M1390 564.0v8M1455 564.0v19M1540 564.0v8M1617 564.0v19M1642 564.0v8M1749 564.0v8M1819 564.0v19M1858 564.0v19M1905 564.0v19M1983 564.0v19M2059 564.0v8M-1 585.0h22M35 585.0h52M95 585.0h52M172 585.0h11M187 585.0h18M213 585.0h22M275 585.0h21M300 585.0h25M325 585.0h23M373 585.0h15M402 585.0h16M443 585.0h20M471 585.0h10M481 585.0h51M546 585.0h29M575 585.0h16M591 585.0h12M607 585.0h26M633 585.0h32M679 585.0h20M724 585.0h53M785 585.0h38M831 585.0h36M871 585.0h44M919 585.0h54M977 585.0h24M1026 585.0h18M1048 585.0h19M1071 585.0h16M1101 585.0h53M1179 585.0h41M1224 585.0h44M1268 585.0h31M1299 585.0h39M1346 585.0h41M1387 585.0h16M1411 585.0h13M1432 585.0h27M1484 585.0h44M1542 585.0h24M1566 585.0h44M1618 585.0h50M1676 585.0h25M1715 585.0h25M1744 585.0h22M1766 585.0h13M1793 585.0h46M1847 585.0h50M1905 585.0h13M1943 585.0h31M2014 585.0h28M2046 585.0h48M2094 585.0h52M34 585.0v19M101 585.0v19M190 585.0v19M293 585.0v12M387 585.0v19M477 585.0v12M523 585.0v19M562 585.0v19M652 585.0v12M758 585.0v12M856 585.0v12M959 585.0v8M1003 585.0v19M1106 585.0v8M1145 585.0v12M1254 585.0v8M1358 585.0v19M1385 585.0v12M1428 585.0v12M1487 585.0v19M1589 585.0v19M1687 585.0v8M1734 585.0v19M1807 585.0v12M1857 585.0v19M1892 585.0v8M1953 585.0v19M2045 585.0v8M2077 585.0v19M2104 585.0v12M0 604.0h31M45 604.0h31M116 604.0h44M200 604.0h40M254 604.0h13M275 604.0h18M307 604.0h40M351 604.0h43M394 604.0h36M470 604.0h54M564 604.0h11M589 604.0h16M630 604.0h15M685 604.0h49M748 604.0h54M806 604.0h28M874 604.0h39M938 604.0h51M1029 604.0h15M1044 604.0h20M1064 604.0h51M1129 604.0h21M1158 604.0h28M1226 604.0h21M1287 604.0h17M1308 604.0h17M1325 604.0h20M1349 604.0h44M1393 604.0h33M1440 604.0h38M1503 604.0h21M1538 604.0h44M1582 604.0h24M1631 604.0h26M1657 604.0h54M1719 604.0h51M1770 604.0h28M1802 604.0h10M1837 604.0h24M1861 604.0h18M1904 604.0h31M1949 604.0h55M2018 604.0h12M2030 604.0h54M2084 604.0h12M2121 604.0h46M13 604.0v19M53 604.0v19M154 604.0v19M224 604.0v8M278 604.0v19M311 604.0v19M360 604.0v12M388 604.0v8M418 604.0v19M524 604.0v19M573 604.0v8M652 604.0v8M707 604.0v8M746 604.0v19M821 604.0v8M885 604.0v19M983 604.0v19M1055 604.0v12M1158 604.0v19M1193 604.0v19M1267 604.0v19M1304 604.0v19M1368 604.0v19M1418 604.0v8M1490 604.0v19M1581 604.0v19M1688 604.0v8M1751 604.0v19M1813 604.0v19M1854 604.0v12M1933 604.0v19M1992 604.0v19M2020 604.0v8M2070 604.0v19M-1 625.0h41M40 625.0h47M101 625.0h39M144 625.0h30M188 625.0h43M231 625.0h28M299 625.0h40M364 625.0h46M418 625.0h11M443 625.0h42M489 625.0h38M527 625.0h20M587 625.0h34M621 625.0h23M652 625.0h23M675 625.0h40M755 625.0h19M774 625.0h11M785 625.0h48M841 625.0h49M904 625.0h12M930 625.0h23M978 625.0h48M1030 625.0h25M1080 625.0h10M1094 625.0h37M1156 625.0h50M1231 625.0h43M1299 625.0h38M1377 625.0h38M1429 625.0h30M1473 625.0h12M1489 625.0h55M1548 625.0h20M1572 625.0h12M1588 625.0h37M1625 625.0h10M1643 625.0h15M1666 625.0h51M1742 625.0h12M1754 625.0h27M1781 625.0h43M1824 625.0h50M1888 625.0h18M1914 625.0h37M1976 625.0h40M2056 625.0h37M2107 625.0h53M1 625.0v19M91 625.0v8M138 625.0v12M178 625.0v19M279 625.0v19M367 625.0v12M402 625.0v19M472 625.0v8M532 625.0v12M588 625.0v8M684 625.0v8M750 625.0v8M785 625.0v19M832 625.0v19M868 625.0v19M954 625.0v19M994 625.0v8M1096 625.0v8M1135 625.0v12M1239 625.0v19M1297 625.0v19M1346 625.0v8M1447 625.0v8M1506 625.0v8M1547 625.0v19M1593 625.0v19M1690 625.0v19M1761 625.0v19M1861 625.0v19M1955 625.0v19M2014 625.0v19M2103 625.0v8M-7 646.0h55M62 646.0h34M110 646.0h52M170 646.0h49M259 646.0h32M299 646.0h19M326 646.0h38M364 646.0h30M434 646.0h21M463 646.0h51M539 646.0h53M600 646.0h14M639 646.0h50M693 646.0h39M757 646.0h22M804 646.0h32M876 646.0h40M956 646.0h26M1022 646.0h24M1086 646.0h55M1141 646.0h26M1207 646.0h49M1256 646.0h42M1306 646.0h50M1370 646.0h32M1406 646.0h25M1439 646.0h23M1487 646.0h32M1533 646.0h47M1588 646.0h41M1629 646.0h15M1652 646.0h50M1742 646.0h18M1760 646.0h40M1800 646.0h15M1815 646.0h43M1862 646.0h38M1914 646.0h25M1939 646.0h18M1961 646.0h30M2016 646.0h20M2044 646.0h35M2119 646.0h42M14 646.0v19M109 646.0v12M175 646.0v19M258 646.0v12M303 646.0v19M384 646.0v19M451 646.0v19M488 646.0v12M553 646.0v19M654 646.0v19M721 646.0v19M817 646.0v12M922 646.0v8M1032 646.0v19M1137 646.0v19M1223 646.0v19M1261 646.0v19M1369 646.0v19M1467 646.0v19M1501 646.0v12M1567 646.0v19M1610 646.0v8M1701 646.0v8M1747 646.0v19M1816 646.0v19M1904 646.0v19M1983 646.0v12M2017 646.0v19M2085 646.0v8M2112 646.0v8M-16 666.0h38M30 666.0h21M55 666.0h33M96 666.0h22M122 666.0h44M170 666.0h27M205 666.0h48M278 666.0h37M340 666.0h55M403 666.0h10M453 666.0h45M506 666.0h54M574 666.0h32M631 666.0h54M685 666.0h23M722 666.0h42M789 666.0h20M809 666.0h54M871 666.0h23M908 666.0h43M951 666.0h55M1031 666.0h15M1050 666.0h44M1094 666.0h15M1134 666.0h55M1203 666.0h18M1246 666.0h35M1321 666.0h31M1356 666.0h37M1401 666.0h19M1460 666.0h20M1505 666.0h45M1575 666.0h15M1598 666.0h25M1627 666.0h45M1712 666.0h37M1753 666.0h49M1827 666.0h35M1902 666.0h52M1954 666.0h55M2017 666.0h43M2060 666.0h10M2070 666.0h38M2116 666.0h24M28 666.0v19M127 666.0v19M180 666.0v19M247 666.0v19M279 666.0v12M379 666.0v19M467 666.0v19M513 666.0v19M547 666.0v12M626 666.0v8M660 666.0v19M712 666.0v8M790 666.0v19M878 666.0v19M952 666.0v19M1039 666.0v12M1072 666.0v19M1180 666.0v12M1231 666.0v19M1327 666.0v19M1392 666.0v8M1474 666.0v19M1528 666.0v19M1553 666.0v19M1633 666.0v19M1686 666.0v8M1757 666.0v12M1860 666.0v8M1946 666.0v19M2046 666.0v19M2072 666.0v19M-13 687.0h18M9 687.0h21M70 687.0h31M109 687.0h18M141 687.0h45M186 687.0h15M209 687.0h54M271 687.0h46M357 687.0h50M447 687.0h50M501 687.0h55M570 687.0h44M639 687.0h28M681 687.0h39M760 687.0h11M811 687.0h53M868 687.0h53M921 687.0h29M990 687.0h29M1019 687.0h32M1051 687.0h13M1068 687.0h27M1103 687.0h48M1165 687.0h41M1231 687.0h36M1275 687.0h55M1344 687.0h50M1408 687.0h33M1441 687.0h52M1533 687.0h46M1579 687.0h32M1619 687.0h22M1645 687.0h28M1698 687.0h15M1713 687.0h47M1785 687.0h18M1828 687.0h54M1886 687.0h51M1937 687.0h27M2004 687.0h25M2043 687.0h28M2096 687.0h48M12 687.0v8M90 687.0v19M172 687.0v12M274 687.0v19M320 687.0v19M429 687.0v19M471 687.0v19M532 687.0v19M634 687.0v19M739 687.0v12M822 687.0v19M886 687.0v19M968 687.0v19M1041 687.0v12M1138 687.0v19M1237 687.0v19M1317 687.0v8M1418 687.0v8M1503 687.0v8M1531 687.0v8M1565 687.0v19M1642 687.0v8M1743 687.0v19M1800 687.0v19M1903 687.0v12M1948 687.0v19M1990 687.0v12M2079 687.0v19M2118 687.0v19" stroke="#000" stroke-width="1.5" fill="none" opacity=".62"/>
<path d="M-1 8.0h26M65 8.0h32M137 8.0h51M213 8.0h11M238 8.0h25M303 8.0h13M320 8.0h17M345 8.0h40M389 8.0h34M448 8.0h16M489 8.0h25M514 8.0h23M551 8.0h27M582 8.0h34M620 8.0h14M638 8.0h49M712 8.0h38M754 8.0h18M772 8.0h10M786 8.0h23M813 8.0h20M841 8.0h30M875 8.0h44M959 8.0h50M1013 8.0h21M1074 8.0h22M1110 8.0h29M1139 8.0h33M1186 8.0h20M1210 8.0h26M1236 8.0h31M1275 8.0h48M1348 8.0h10M1383 8.0h53M1476 8.0h31M1507 8.0h29M1544 8.0h29M1587 8.0h54M1649 8.0h21M1684 8.0h40M1764 8.0h21M1785 8.0h26M1811 8.0h32M1857 8.0h11M1893 8.0h36M1937 8.0h34M1996 8.0h10M2020 8.0h12M2072 8.0h21M2118 8.0h22M15 8.0v19M84 8.0v19M154 8.0v19M211 8.0v19M249 8.0v19M321 8.0v19M350 8.0v19M386 8.0v12M454 8.0v19M557 8.0v19M600 8.0v19M660 8.0v19M696 8.0v19M761 8.0v19M808 8.0v8M913 8.0v12M977 8.0v19M1022 8.0v8M1057 8.0v19M1150 8.0v19M1179 8.0v12M1280 8.0v19M1337 8.0v19M1445 8.0v19M1488 8.0v8M1594 8.0v8M1682 8.0v19M1733 8.0v12M1830 8.0v12M1935 8.0v19M1973 8.0v12M2053 8.0v19M2097 8.0v8M-16 28.0h39M48 28.0h20M93 28.0h39M146 28.0h54M240 28.0h30M284 28.0h27M319 28.0h40M373 28.0h19M392 28.0h34M451 28.0h21M512 28.0h41M561 28.0h21M582 28.0h41M631 28.0h42M698 28.0h42M748 28.0h14M770 28.0h54M849 28.0h52M901 28.0h29M938 28.0h45M1023 28.0h52M1083 28.0h41M1132 28.0h54M1226 28.0h28M1262 28.0h51M1317 28.0h47M1364 28.0h40M1429 28.0h26M1463 28.0h52M1523 28.0h39M1570 28.0h42M1652 28.0h53M1713 28.0h32M1753 28.0h51M1812 28.0h36M1856 28.0h21M1917 28.0h38M1963 28.0h31M2019 28.0h19M2063 28.0h20M2087 28.0h33M2134 28.0h28M5 28.0v19M51 28.0v19M150 28.0v19M260 28.0v19M323 28.0v19M418 28.0v19M446 28.0v12M491 28.0v19M572 28.0v19M680 28.0v12M733 28.0v12M838 28.0v8M923 28.0v12M969 28.0v8M1011 28.0v8M1076 28.0v12M1162 28.0v12M1257 28.0v8M1335 28.0v19M1404 28.0v19M1513 28.0v19M1547 28.0v19M1598 28.0v12M1670 28.0v8M1739 28.0v19M1799 28.0v19M1838 28.0v19M1910 28.0v8M2005 28.0v19M2068 28.0v8M2130 28.0v19M-2 48.0h28M34 48.0h18M66 48.0h36M127 48.0h51M203 48.0h33M250 48.0h19M273 48.0h48M335 48.0h46M395 48.0h22M421 48.0h48M469 48.0h32M541 48.0h10M565 48.0h16M589 48.0h46M660 48.0h44M708 48.0h30M778 48.0h46M838 48.0h37M889 48.0h24M927 48.0h28M969 48.0h55M1038 48.0h34M1076 48.0h48M1149 48.0h26M1215 48.0h29M1258 48.0h26M1298 48.0h11M1317 48.0h29M1360 48.0h28M1392 48.0h40M1432 48.0h17M1489 48.0h49M1552 48.0h25M1585 48.0h12M1601 48.0h35M1636 48.0h40M1701 48.0h45M1754 48.0h25M1793 48.0h12M1809 48.0h41M1858 48.0h19M1917 48.0h28M1953 48.0h41M2019 48.0h40M2084 48.0h51M7 48.0v8M48 48.0v19M109 48.0v19M177 48.0v19M239 48.0v19M267 48.0v19M336 48.0v19M436 48.0v12M465 48.0v8M522 48.0v19M605 48.0v8M699 48.0v12M725 48.0v19M804 48.0v19M902 48.0v19M976 48.0v19M1051 48.0v12M1113 48.0v19M1146 48.0v19M1171 48.0v19M1270 48.0v19M1377 48.0v19M1441 48.0v12M1487 48.0v19M1582 48.0v19M1649 48.0v19M1693 48.0v19M1792 48.0v19M1823 48.0v8M1877 48.0v19M1912 48.0v8M2021 48.0v8M2088 48.0v19M2121 48.0v19M-17 67.0h17M4 67.0h49M93 67.0h17M150 67.0h18M176 67.0h55M245 67.0h19M268 67.0h49M321 67.0h36M361 67.0h14M400 67.0h23M423 67.0h45M468 67.0h52M534 67.0h14M556 67.0h13M594 67.0h46M640 67.0h35M700 67.0h18M718 67.0h37M755 67.0h30M825 67.0h48M887 67.0h41M936 67.0h51M995 67.0h13M1012 67.0h54M1074 67.0h19M1118 67.0h50M1208 67.0h42M1258 67.0h45M1328 67.0h49M1381 67.0h26M1407 67.0h45M1456 67.0h26M1490 67.0h43M1537 67.0h25M1570 67.0h39M1649 67.0h34M1687 67.0h18M1745 67.0h11M1796 67.0h31M1827 67.0h46M1913 67.0h12M1925 67.0h17M1967 67.0h48M2029 67.0h25M2068 67.0h39M2121 67.0h30M33 67.0v8M127 67.0v19M158 67.0v12M237 67.0v12M276 67.0v8M386 67.0v19M438 67.0v12M542 67.0v19M612 67.0v12M674 67.0v19M777 67.0v19M851 67.0v19M893 67.0v19M1000 67.0v19M1105 67.0v19M1176 67.0v19M1205 67.0v19M1303 67.0v12M1351 67.0v19M1384 67.0v8M1413 67.0v8M1461 67.0v12M1511 67.0v8M1598 67.0v19M1707 67.0v19M1732 67.0v19M1817 67.0v19M1921 67.0v19M1987 67.0v19M2071 67.0v8M2120 67.0v12M-18 86.0h33M29 86.0h40M73 86.0h45M126 86.0h17M151 86.0h20M179 86.0h53M236 86.0h12M262 86.0h12M282 86.0h33M323 86.0h13M376 86.0h11M427 86.0h39M480 86.0h19M499 86.0h52M559 86.0h28M601 86.0h53M658 86.0h20M678 86.0h22M740 86.0h11M776 86.0h24M840 86.0h15M880 86.0h35M955 86.0h33M1028 86.0h29M1061 86.0h39M1108 86.0h28M1136 86.0h55M1205 86.0h20M1229 86.0h21M1290 86.0h23M1313 86.0h51M1389 86.0h37M1466 86.0h27M1493 86.0h39M1532 86.0h38M1610 86.0h36M1650 86.0h12M1662 86.0h45M1732 86.0h46M1786 86.0h16M1842 86.0h14M1860 86.0h41M1901 86.0h40M1941 86.0h53M1998 86.0h51M2049 86.0h41M2104 86.0h13M2117 86.0h26M28 86.0v19M134 86.0v8M163 86.0v12M210 86.0v19M316 86.0v19M365 86.0v19M419 86.0v8M484 86.0v8M520 86.0v19M565 86.0v19M599 86.0v12M703 86.0v8M784 86.0v19M854 86.0v19M933 86.0v19M1006 86.0v19M1111 86.0v12M1137 86.0v19M1219 86.0v12M1314 86.0v8M1356 86.0v19M1442 86.0v8M1500 86.0v19M1565 86.0v12M1606 86.0v19M1641 86.0v19M1697 86.0v8M1776 86.0v19M1886 86.0v12M1946 86.0v8M2034 86.0v12M2065 86.0v12M2126 86.0v19M-7 105.0h30M37 105.0h45M82 105.0h28M150 105.0h18M193 105.0h11M218 105.0h19M277 105.0h51M328 105.0h13M381 105.0h37M426 105.0h16M456 105.0h45M505 105.0h30M535 105.0h29M568 105.0h18M594 105.0h41M675 105.0h30M713 105.0h12M725 105.0h44M809 105.0h45M854 105.0h11M865 105.0h13M882 105.0h32M928 105.0h26M979 105.0h11M994 105.0h43M1051 105.0h18M1077 105.0h22M1107 105.0h32M1139 105.0h20M1184 105.0h49M1237 105.0h16M1261 105.0h43M1329 105.0h20M1389 105.0h55M1448 105.0h38M1500 105.0h37M1537 105.0h31M1576 105.0h38M1618 105.0h39M1682 105.0h37M1723 105.0h38M1761 105.0h52M1817 105.0h44M1875 105.0h41M1941 105.0h10M1951 105.0h18M1983 105.0h53M2036 105.0h23M2059 105.0h12M2096 105.0h25M2135 105.0h55M25 105.0v19M77 105.0v12M137 105.0v12M200 105.0v19M291 105.0v19M346 105.0v19M416 105.0v12M525 105.0v8M629 105.0v19M705 105.0v19M748 105.0v12M803 105.0v19M876 105.0v8M913 105.0v12M988 105.0v8M1049 105.0v12M1115 105.0v19M1200 105.0v19M1304 105.0v8M1354 105.0v19M1380 105.0v8M1470 105.0v19M1570 105.0v19M1618 105.0v19M1645 105.0v19M1673 105.0v19M1737 105.0v19M1811 105.0v19M1896 105.0v19M1972 105.0v19M2071 105.0v19M-3 124.0h19M30 124.0h33M88 124.0h11M139 124.0h43M186 124.0h28M222 124.0h14M236 124.0h15M259 124.0h49M333 124.0h55M402 124.0h29M431 124.0h27M498 124.0h25M523 124.0h12M535 124.0h52M595 124.0h32M667 124.0h48M740 124.0h45M789 124.0h40M854 124.0h15M869 124.0h25M902 124.0h44M960 124.0h35M995 124.0h52M1061 124.0h34M1099 124.0h51M1175 124.0h23M1238 124.0h49M1295 124.0h34M1337 124.0h16M1393 124.0h45M1478 124.0h55M1541 124.0h25M1566 124.0h23M1597 124.0h29M1634 124.0h49M1683 124.0h20M1703 124.0h50M1767 124.0h21M1792 124.0h51M1843 124.0h46M1914 124.0h50M2004 124.0h44M2088 124.0h36M2138 124.0h24M30 124.0v19M131 124.0v12M194 124.0v19M254 124.0v8M356 124.0v19M404 124.0v19M432 124.0v12M471 124.0v19M568 124.0v19M670 124.0v19M718 124.0v19M767 124.0v19M868 124.0v8M975 124.0v19M1009 124.0v8M1096 124.0v12M1187 124.0v8M1252 124.0v12M1336 124.0v19M1390 124.0v19M1476 124.0v8M1501 124.0v12M1546 124.0v8M1582 124.0v19M1626 124.0v19M1729 124.0v8M1827 124.0v19M1893 124.0v12M1988 124.0v19M2093 124.0v8M-18 143.0h22M8 143.0h30M46 143.0h21M81 143.0h53M174 143.0h15M193 143.0h35M253 143.0h39M306 143.0h10M316 143.0h48M372 143.0h18M430 143.0h10M454 143.0h34M496 143.0h14M524 143.0h55M587 143.0h11M598 143.0h40M646 143.0h22M676 143.0h34M714 143.0h28M756 143.0h51M847 143.0h15M887 143.0h17M912 143.0h36M956 143.0h14M995 143.0h37M1032 143.0h24M1070 143.0h25M1103 143.0h52M1195 143.0h14M1213 143.0h27M1240 143.0h45M1299 143.0h37M1340 143.0h44M1398 143.0h25M1423 143.0h38M1469 143.0h18M1487 143.0h10M1501 143.0h33M1534 143.0h11M1553 143.0h45M1612 143.0h34M1671 143.0h15M1686 143.0h23M1713 143.0h38M1751 143.0h40M1816 143.0h15M1839 143.0h48M1927 143.0h40M1992 143.0h11M2003 143.0h20M2037 143.0h42M2093 143.0h47M39 143.0v19M68 143.0v12M96 143.0v19M173 143.0v19M246 143.0v8M292 143.0v19M335 143.0v19M384 143.0v19M418 143.0v19M470 143.0v19M548 143.0v12M607 143.0v12M692 143.0v19M753 143.0v8M863 143.0v8M909 143.0v19M943 143.0v8M1016 143.0v8M1093 143.0v12M1143 143.0v8M1231 143.0v19M1332 143.0v19M1374 143.0v19M1429 143.0v8M1500 143.0v19M1528 143.0v8M1576 143.0v19M1611 143.0v19M1652 143.0v19M1719 143.0v12M1763 143.0v19M1854 143.0v19M1890 143.0v19M1929 143.0v8M2036 143.0v19M2108 143.0v19M-3 163.0h47M58 163.0h25M108 163.0h18M134 163.0h11M170 163.0h10M220 163.0h34M258 163.0h25M297 163.0h52M389 163.0h13M402 163.0h10M416 163.0h36M456 163.0h42M538 163.0h49M591 163.0h29M620 163.0h42M666 163.0h12M718 163.0h34M760 163.0h11M796 163.0h29M839 163.0h38M877 163.0h51M928 163.0h33M986 163.0h43M1037 163.0h55M1117 163.0h48M1179 163.0h34M1221 163.0h20M1266 163.0h53M1319 163.0h51M1384 163.0h13M1437 163.0h23M1485 163.0h49M1548 163.0h16M1589 163.0h29M1643 163.0h33M1690 163.0h18M1722 163.0h32M1754 163.0h41M1795 163.0h46M1866 163.0h23M1914 163.0h39M1953 163.0h13M2006 163.0h15M2021 163.0h31M2056 163.0h33M2097 163.0h26M2131 163.0h40M7 163.0v19M64 163.0v8M169 163.0v19M243 163.0v12M348 163.0v12M406 163.0v19M487 163.0v12M588 163.0v12M685 163.0v8M755 163.0v19M795 163.0v8M878 163.0v8M981 163.0v19M1089 163.0v8M1117 163.0v19M1194 163.0v8M1271 163.0v19M1374 163.0v19M1477 163.0v19M1530 163.0v19M1569 163.0v8M1669 163.0v8M1699 163.0v8M1782 163.0v19M1890 163.0v19M1984 163.0v8M2091 163.0v19M2131 163.0v19M-6 183.0h29M31 183.0h10M49 183.0h43M132 183.0h41M187 183.0h34M225 183.0h51M280 183.0h26M314 183.0h49M367 183.0h39M406 183.0h19M433 183.0h15M488 183.0h37M539 183.0h49M613 183.0h51M678 183.0h21M703 183.0h18M735 183.0h20M795 183.0h42M851 183.0h46M905 183.0h11M920 183.0h37M965 183.0h46M1025 183.0h42M1092 183.0h23M1140 183.0h25M1205 183.0h20M1239 183.0h45M1292 183.0h30M1330 183.0h49M1379 183.0h22M1409 183.0h37M1454 183.0h43M1505 183.0h41M1586 183.0h55M1681 183.0h15M1696 183.0h54M1750 183.0h31M1781 183.0h16M1837 183.0h28M1890 183.0h21M1911 183.0h44M1969 183.0h21M2030 183.0h31M2101 183.0h26M2127 183.0h36M6 183.0v19M39 183.0v19M107 183.0v19M184 183.0v8M217 183.0v19M250 183.0v12M280 183.0v8M369 183.0v19M407 183.0v19M485 183.0v8M538 183.0v19M566 183.0v19M660 183.0v19M768 183.0v8M858 183.0v19M929 183.0v8M1013 183.0v19M1051 183.0v12M1107 183.0v8M1210 183.0v19M1247 183.0v8M1355 183.0v19M1428 183.0v19M1467 183.0v19M1531 183.0v19M1614 183.0v19M1644 183.0v12M1734 183.0v12M1807 183.0v12M1856 183.0v19M1948 183.0v8M1990 183.0v19M2021 183.0v19M2085 183.0v19M0 204.0h42M50 204.0h28M82 204.0h50M140 204.0h39M193 204.0h35M268 204.0h48M316 204.0h18M359 204.0h22M395 204.0h54M489 204.0h16M519 204.0h24M547 204.0h25M576 204.0h51M627 204.0h38M673 204.0h49M736 204.0h53M793 204.0h54M861 204.0h16M885 204.0h47M940 204.0h50M998 204.0h54M1052 204.0h44M1136 204.0h45M1181 204.0h23M1204 204.0h31M1260 204.0h47M1321 204.0h50M1385 204.0h43M1453 204.0h28M1506 204.0h31M1537 204.0h28M1569 204.0h43M1626 204.0h28M1668 204.0h33M1705 204.0h28M1773 204.0h22M1835 204.0h12M1847 204.0h41M1892 204.0h29M1935 204.0h52M1995 204.0h36M2056 204.0h53M2123 204.0h31M33 204.0v19M99 204.0v19M125 204.0v12M223 204.0v19M331 204.0v8M424 204.0v19M508 204.0v19M538 204.0v12M631 204.0v8M717 204.0v8M767 204.0v12M813 204.0v19M868 204.0v19M976 204.0v8M1050 204.0v19M1157 204.0v12M1264 204.0v19M1290 204.0v12M1399 204.0v12M1498 204.0v8M1587 204.0v19M1667 204.0v19M1731 204.0v12M1768 204.0v19M1864 204.0v19M1959 204.0v19M1991 204.0v19M2083 204.0v8M2126 204.0v19M-20 224.0h22M6 224.0h16M26 224.0h39M79 224.0h40M133 224.0h28M186 224.0h14M200 224.0h54M279 224.0h49M342 224.0h49M416 224.0h48M504 224.0h49M557 224.0h11M608 224.0h38M671 224.0h22M693 224.0h54M755 224.0h22M777 224.0h44M829 224.0h15M848 224.0h24M886 224.0h10M896 224.0h37M933 224.0h29M966 224.0h34M1014 224.0h20M1034 224.0h34M1108 224.0h22M1134 224.0h18M1166 224.0h38M1208 224.0h36M1244 224.0h27M1285 224.0h43M1332 224.0h54M1426 224.0h53M1487 224.0h15M1506 224.0h37M1557 224.0h52M1649 224.0h45M1734 224.0h38M1812 224.0h22M1838 224.0h30M1893 224.0h26M1959 224.0h53M2012 224.0h22M2059 224.0h20M2087 224.0h50M2137 224.0h55M27 224.0v19M70 224.0v19M118 224.0v8M212 224.0v12M291 224.0v8M316 224.0v19M400 224.0v19M435 224.0v19M479 224.0v19M504 224.0v8M606 224.0v19M692 224.0v19M790 224.0v19M857 224.0v19M950 224.0v19M996 224.0v19M1075 224.0v19M1156 224.0v8M1210 224.0v19M1272 224.0v8M1362 224.0v8M1455 224.0v19M1508 224.0v8M1618 224.0v19M1683 224.0v8M1718 224.0v19M1795 224.0v12M1861 224.0v19M1891 224.0v19M1996 224.0v8M2087 224.0v8M0 245.0h15M15 245.0h41M81 245.0h40M125 245.0h38M171 245.0h19M204 245.0h27M256 245.0h38M319 245.0h14M373 245.0h43M420 245.0h28M448 245.0h47M503 245.0h14M531 245.0h28M573 245.0h16M593 245.0h32M665 245.0h37M702 245.0h31M737 245.0h32M809 245.0h16M839 245.0h30M869 245.0h41M918 245.0h12M970 245.0h38M1048 245.0h13M1086 245.0h24M1118 245.0h29M1155 245.0h39M1219 245.0h43M1270 245.0h42M1337 245.0h15M1377 245.0h46M1437 245.0h36M1513 245.0h22M1560 245.0h35M1609 245.0h17M1630 245.0h14M1658 245.0h30M1688 245.0h29M1725 245.0h36M1786 245.0h47M1833 245.0h21M1854 245.0h38M1896 245.0h29M1925 245.0h46M1971 245.0h47M2058 245.0h13M2071 245.0h15M2094 245.0h50M18 245.0v19M127 245.0v12M156 245.0v19M239 245.0v19M284 245.0v19M376 245.0v19M473 245.0v19M557 245.0v19M641 245.0v8M688 245.0v19M773 245.0v19M877 245.0v8M916 245.0v19M975 245.0v19M1043 245.0v8M1117 245.0v19M1199 245.0v19M1240 245.0v12M1334 245.0v19M1404 245.0v19M1452 245.0v12M1529 245.0v8M1605 245.0v19M1662 245.0v12M1766 245.0v12M1846 245.0v19M1937 245.0v19M1977 245.0v19M2050 245.0v8M2099 245.0v12M-13 265.0h54M55 265.0h47M142 265.0h42M184 265.0h17M226 265.0h29M255 265.0h31M294 265.0h49M351 265.0h20M371 265.0h12M387 265.0h41M428 265.0h27M469 265.0h43M516 265.0h12M532 265.0h31M571 265.0h24M603 265.0h39M642 265.0h12M694 265.0h17M715 265.0h16M771 265.0h29M800 265.0h25M825 265.0h50M875 265.0h47M930 265.0h31M969 265.0h36M1009 265.0h27M1044 265.0h14M1072 265.0h21M1097 265.0h41M1138 265.0h29M1181 265.0h24M1205 265.0h45M1254 265.0h34M1328 265.0h46M1374 265.0h28M1416 265.0h12M1468 265.0h26M1494 265.0h39M1537 265.0h17M1594 265.0h15M1613 265.0h30M1651 265.0h25M1701 265.0h41M1742 265.0h54M1836 265.0h10M1871 265.0h30M1926 265.0h35M1969 265.0h30M2007 265.0h50M2061 265.0h47M2116 265.0h38M0 265.0v19M99 265.0v12M153 265.0v8M250 265.0v19M286 265.0v12M341 265.0v12M415 265.0v19M467 265.0v19M509 265.0v12M555 265.0v8M657 265.0v19M760 265.0v19M847 265.0v12M928 265.0v19M985 265.0v8M1086 265.0v12M1186 265.0v19M1280 265.0v8M1386 265.0v19M1483 265.0v19M1574 265.0v8M1637 265.0v8M1733 265.0v12M1835 265.0v12M1943 265.0v19M2016 265.0v19M2101 265.0v19M-10 286.0h18M12 286.0h38M75 286.0h45M160 286.0h22M222 286.0h16M263 286.0h11M288 286.0h21M317 286.0h44M361 286.0h22M391 286.0h55M450 286.0h27M491 286.0h27M518 286.0h50M576 286.0h29M645 286.0h17M687 286.0h25M712 286.0h48M764 286.0h27M805 286.0h38M851 286.0h14M879 286.0h35M928 286.0h19M961 286.0h52M1053 286.0h40M1118 286.0h13M1145 286.0h49M1219 286.0h12M1235 286.0h42M1317 286.0h26M1351 286.0h42M1433 286.0h21M1462 286.0h37M1524 286.0h49M1613 286.0h52M1669 286.0h34M1743 286.0h55M1838 286.0h24M1887 286.0h49M1961 286.0h52M2013 286.0h28M2045 286.0h36M2095 286.0h40M11 286.0v19M97 286.0v19M178 286.0v19M233 286.0v12M299 286.0v12M342 286.0v8M382 286.0v19M490 286.0v19M584 286.0v8M627 286.0v8M714 286.0v19M756 286.0v8M786 286.0v8M865 286.0v19M913 286.0v8M940 286.0v19M1020 286.0v19M1130 286.0v19M1236 286.0v19M1289 286.0v12M1377 286.0v19M1465 286.0v19M1531 286.0v8M1631 286.0v19M1657 286.0v19M1687 286.0v12M1736 286.0v19M1793 286.0v19M1856 286.0v12M1966 286.0v12M2047 286.0v8M-5 306.0h24M27 306.0h36M71 306.0h23M102 306.0h37M139 306.0h30M169 306.0h19M192 306.0h30M230 306.0h25M263 306.0h25M296 306.0h16M352 306.0h45M411 306.0h26M437 306.0h44M506 306.0h50M564 306.0h12M580 306.0h52M632 306.0h16M662 306.0h29M695 306.0h44M743 306.0h30M781 306.0h21M802 306.0h37M879 306.0h37M930 306.0h10M940 306.0h26M991 306.0h55M1060 306.0h15M1075 306.0h10M1093 306.0h29M1147 306.0h39M1190 306.0h50M1244 306.0h33M1302 306.0h29M1339 306.0h15M1368 306.0h37M1430 306.0h10M1454 306.0h40M1502 306.0h40M1542 306.0h29M1596 306.0h14M1614 306.0h37M1651 306.0h16M1692 306.0h25M1757 306.0h42M1824 306.0h34M1883 306.0h22M1945 306.0h53M2038 306.0h40M2103 306.0h43M12 306.0v12M40 306.0v8M80 306.0v19M156 306.0v19M182 306.0v19M250 306.0v19M304 306.0v19M392 306.0v19M443 306.0v12M530 306.0v19M587 306.0v8M646 306.0v8M749 306.0v19M844 306.0v19M924 306.0v8M1034 306.0v19M1065 306.0v12M1096 306.0v12M1175 306.0v19M1275 306.0v12M1326 306.0v19M1381 306.0v8M1472 306.0v19M1520 306.0v12M1602 306.0v19M1700 306.0v12M1781 306.0v12M1852 306.0v19M1891 306.0v19M1954 306.0v8M2038 306.0v19M-1 326.0h25M24 326.0h42M74 326.0h52M166 326.0h33M207 326.0h53M285 326.0h12M337 326.0h32M377 326.0h32M413 326.0h24M451 326.0h43M508 326.0h33M566 326.0h27M607 326.0h36M647 326.0h48M699 326.0h55M754 326.0h31M785 326.0h16M805 326.0h37M867 326.0h49M930 326.0h52M1022 326.0h17M1053 326.0h22M1083 326.0h24M1121 326.0h17M1163 326.0h12M1189 326.0h30M1223 326.0h32M1259 326.0h36M1303 326.0h27M1338 326.0h41M1387 326.0h20M1411 326.0h12M1437 326.0h30M1471 326.0h15M1526 326.0h41M1575 326.0h29M1604 326.0h29M1637 326.0h48M1693 326.0h42M1775 326.0h41M1856 326.0h20M1890 326.0h22M1926 326.0h38M1972 326.0h51M2048 326.0h47M2095 326.0h55M12 326.0v8M90 326.0v12M180 326.0v8M278 326.0v19M335 326.0v8M362 326.0v19M432 326.0v19M471 326.0v19M524 326.0v12M623 326.0v19M684 326.0v12M787 326.0v19M832 326.0v12M934 326.0v19M995 326.0v19M1070 326.0v19M1136 326.0v19M1201 326.0v19M1230 326.0v19M1339 326.0v19M1424 326.0v19M1520 326.0v12M1578 326.0v8M1616 326.0v8M1715 326.0v8M1816 326.0v19M1923 326.0v19M1961 326.0v19M2003 326.0v19M2081 326.0v8M-9 347.0h30M61 347.0h46M115 347.0h17M157 347.0h50M232 347.0h22M279 347.0h46M365 347.0h17M396 347.0h18M454 347.0h14M476 347.0h28M508 347.0h50M583 347.0h24M607 347.0h34M641 347.0h18M673 347.0h14M691 347.0h52M757 347.0h54M811 347.0h27M878 347.0h10M888 347.0h47M960 347.0h23M1008 347.0h48M1096 347.0h24M1145 347.0h37M1207 347.0h47M1268 347.0h29M1297 347.0h24M1325 347.0h45M1384 347.0h48M1440 347.0h51M1516 347.0h41M1557 347.0h51M1612 347.0h50M1676 347.0h50M1734 347.0h18M1792 347.0h12M1818 347.0h12M1844 347.0h20M1872 347.0h47M1959 347.0h39M2038 347.0h40M2092 347.0h36M2132 347.0h30M30 347.0v19M70 347.0v8M163 347.0v8M212 347.0v19M294 347.0v12M361 347.0v19M471 347.0v19M506 347.0v19M565 347.0v19M599 347.0v8M633 347.0v8M667 347.0v19M710 347.0v8M759 347.0v19M839 347.0v19M912 347.0v12M1013 347.0v19M1062 347.0v12M1097 347.0v19M1156 347.0v8M1233 347.0v19M1307 347.0v12M1410 347.0v19M1451 347.0v19M1553 347.0v12M1579 347.0v12M1660 347.0v12M1691 347.0v8M1763 347.0v19M1851 347.0v19M1939 347.0v8M2021 347.0v19M2055 347.0v19M2102 347.0v19M-2 366.0h14M52 366.0h11M88 366.0h30M118 366.0h17M149 366.0h10M184 366.0h25M234 366.0h39M273 366.0h54M331 366.0h34M373 366.0h17M390 366.0h17M447 366.0h22M483 366.0h30M521 366.0h24M553 366.0h46M613 366.0h47M664 366.0h25M693 366.0h21M718 366.0h17M775 366.0h47M836 366.0h50M900 366.0h11M951 366.0h27M1003 366.0h40M1047 366.0h10M1061 366.0h11M1097 366.0h37M1138 366.0h19M1171 366.0h26M1201 366.0h31M1257 366.0h16M1313 366.0h30M1351 366.0h22M1381 366.0h51M1457 366.0h52M1549 366.0h33M1586 366.0h37M1663 366.0h20M1697 366.0h25M1730 366.0h13M1747 366.0h53M1825 366.0h45M1878 366.0h26M1908 366.0h17M1939 366.0h14M1953 366.0h43M2000 366.0h26M2066 366.0h33M2107 366.0h13M2134 366.0h24M30 366.0v12M114 366.0v12M208 366.0v12M266 366.0v19M372 366.0v12M481 366.0v19M509 366.0v8M568 366.0v19M646 366.0v12M718 366.0v8M817 366.0v8M901 366.0v19M967 366.0v19M1069 366.0v8M1137 366.0v19M1225 366.0v19M1320 366.0v8M1421 366.0v19M1531 366.0v19M1618 366.0v12M1697 366.0v19M1727 366.0v8M1798 366.0v19M1877 366.0v19M1973 366.0v19M2023 366.0v8M2080 366.0v12M2138 366.0v12M-18 385.0h20M10 385.0h49M59 385.0h18M102 385.0h51M178 385.0h26M244 385.0h47M331 385.0h27M398 385.0h37M435 385.0h34M477 385.0h35M526 385.0h37M567 385.0h50M617 385.0h18M639 385.0h46M693 385.0h24M742 385.0h25M775 385.0h34M813 385.0h39M860 385.0h36M910 385.0h48M962 385.0h27M1029 385.0h32M1061 385.0h42M1111 385.0h20M1171 385.0h35M1206 385.0h53M1299 385.0h50M1374 385.0h48M1447 385.0h34M1481 385.0h45M1551 385.0h28M1583 385.0h11M1619 385.0h51M1684 385.0h42M1730 385.0h11M1755 385.0h41M1796 385.0h51M1855 385.0h31M1890 385.0h25M1955 385.0h38M2018 385.0h10M2036 385.0h20M2070 385.0h16M2100 385.0h50M39 385.0v19M132 385.0v12M228 385.0v19M284 385.0v12M332 385.0v12M379 385.0v19M458 385.0v19M564 385.0v19M619 385.0v12M696 385.0v19M725 385.0v12M772 385.0v19M872 385.0v12M897 385.0v19M948 385.0v19M1052 385.0v19M1155 385.0v8M1196 385.0v19M1253 385.0v12M1289 385.0v19M1356 385.0v12M1389 385.0v19M1441 385.0v19M1490 385.0v19M1578 385.0v19M1612 385.0v19M1655 385.0v19M1688 385.0v12M1724 385.0v8M1759 385.0v19M1838 385.0v19M1891 385.0v12M1976 385.0v19M2063 385.0v8M2138 385.0v19M-13 405.0h40M27 405.0h18M45 405.0h52M105 405.0h32M162 405.0h47M209 405.0h38M287 405.0h45M346 405.0h24M384 405.0h15M424 405.0h45M494 405.0h50M558 405.0h25M591 405.0h37M642 405.0h23M669 405.0h32M709 405.0h46M759 405.0h22M795 405.0h43M878 405.0h14M900 405.0h50M975 405.0h37M1037 405.0h28M1069 405.0h44M1121 405.0h54M1183 405.0h26M1217 405.0h53M1295 405.0h46M1349 405.0h22M1411 405.0h13M1438 405.0h18M1496 405.0h34M1555 405.0h29M1588 405.0h10M1606 405.0h30M1640 405.0h18M1666 405.0h36M1706 405.0h31M1751 405.0h25M1780 405.0h46M1834 405.0h41M1879 405.0h43M1926 405.0h51M1991 405.0h53M2044 405.0h19M2103 405.0h48M19 405.0v19M128 405.0v8M238 405.0v8M298 405.0v19M366 405.0v12M445 405.0v12M472 405.0v19M540 405.0v12M631 405.0v19M706 405.0v8M752 405.0v19M816 405.0v19M851 405.0v8M898 405.0v19M936 405.0v8M963 405.0v8M1031 405.0v19M1111 405.0v19M1204 405.0v19M1294 405.0v19M1365 405.0v19M1442 405.0v8M1502 405.0v8M1548 405.0v12M1621 405.0v19M1690 405.0v8M1741 405.0v12M1838 405.0v8M1888 405.0v19M1930 405.0v19M1993 405.0v19M2055 405.0v8M2136 405.0v12M-16 425.0h32M20 425.0h46M70 425.0h38M148 425.0h20M172 425.0h51M248 425.0h48M321 425.0h41M376 425.0h42M458 425.0h18M480 425.0h24M529 425.0h19M588 425.0h49M645 425.0h44M714 425.0h24M746 425.0h44M804 425.0h43M851 425.0h12M903 425.0h21M949 425.0h50M1007 425.0h41M1062 425.0h13M1115 425.0h27M1167 425.0h27M1208 425.0h29M1277 425.0h13M1290 425.0h15M1345 425.0h24M1373 425.0h22M1409 425.0h27M1440 425.0h20M1464 425.0h22M1494 425.0h21M1529 425.0h39M1568 425.0h32M1604 425.0h17M1661 425.0h20M1721 425.0h50M1779 425.0h54M1858 425.0h35M1897 425.0h36M1973 425.0h25M2038 425.0h46M2109 425.0h46M29 425.0v19M85 425.0v19M119 425.0v8M162 425.0v19M258 425.0v12M300 425.0v19M351 425.0v19M431 425.0v19M475 425.0v12M557 425.0v19M625 425.0v8M685 425.0v19M749 425.0v19M829 425.0v19M866 425.0v8M959 425.0v19M1028 425.0v19M1095 425.0v8M1134 425.0v12M1228 425.0v19M1313 425.0v19M1365 425.0v8M1395 425.0v19M1444 425.0v12M1533 425.0v12M1600 425.0v8M1627 425.0v8M1662 425.0v8M1732 425.0v19M1810 425.0v19M1850 425.0v8M1929 425.0v19M2018 425.0v19M2050 425.0v19M-20 446.0h11M-1 446.0h33M72 446.0h21M107 446.0h32M164 446.0h30M202 446.0h17M244 446.0h25M277 446.0h20M337 446.0h37M378 446.0h49M431 446.0h42M487 446.0h26M521 446.0h38M573 446.0h49M647 446.0h36M691 446.0h54M753 446.0h42M803 446.0h29M857 446.0h48M909 446.0h52M969 446.0h23M1006 446.0h22M1042 446.0h50M1092 446.0h29M1129 446.0h47M1201 446.0h40M1249 446.0h50M1313 446.0h48M1401 446.0h42M1457 446.0h47M1544 446.0h27M1596 446.0h53M1674 446.0h37M1736 446.0h55M1799 446.0h32M1871 446.0h22M1933 446.0h41M2014 446.0h41M2063 446.0h10M2073 446.0h18M2099 446.0h39M25 446.0v8M125 446.0v19M175 446.0v8M219 446.0v12M299 446.0v12M365 446.0v19M407 446.0v19M483 446.0v12M538 446.0v19M639 446.0v8M734 446.0v19M762 446.0v19M857 446.0v19M947 446.0v19M1025 446.0v19M1055 446.0v19M1140 446.0v8M1190 446.0v19M1224 446.0v19M1291 446.0v12M1328 446.0v19M1413 446.0v12M1505 446.0v12M1597 446.0v19M1703 446.0v8M1794 446.0v19M1878 446.0v19M1933 446.0v19M1972 446.0v8M2022 446.0v8M2068 446.0v19M2103 446.0v19M-10 465.0h46M40 465.0h53M97 465.0h47M152 465.0h21M177 465.0h25M216 465.0h49M290 465.0h37M331 465.0h39M384 465.0h46M434 465.0h51M525 465.0h14M579 465.0h37M656 465.0h42M723 465.0h13M776 465.0h34M824 465.0h15M843 465.0h41M924 465.0h48M980 465.0h37M1025 465.0h43M1076 465.0h30M1146 465.0h51M1237 465.0h46M1308 465.0h40M1348 465.0h18M1366 465.0h47M1438 465.0h48M1494 465.0h17M1515 465.0h46M1561 465.0h49M1610 465.0h49M1699 465.0h15M1728 465.0h11M1779 465.0h29M1808 465.0h26M1859 465.0h26M1885 465.0h26M1919 465.0h38M1965 465.0h43M2048 465.0h40M2088 465.0h18M2131 465.0h28M34 465.0v19M98 465.0v8M140 465.0v19M225 465.0v8M297 465.0v12M357 465.0v19M414 465.0v19M489 465.0v8M583 465.0v19M631 465.0v19M664 465.0v19M710 465.0v8M788 465.0v19M824 465.0v19M892 465.0v8M999 465.0v8M1030 465.0v19M1099 465.0v19M1189 465.0v19M1266 465.0v8M1307 465.0v12M1368 465.0v19M1468 465.0v12M1505 465.0v19M1582 465.0v12M1615 465.0v19M1686 465.0v8M1718 465.0v19M1753 465.0v8M1781 465.0v19M1823 465.0v8M1865 465.0v12M1928 465.0v19M1981 465.0v12M2012 465.0v8M2096 465.0v19M2130 465.0v19M-2 484.0h48M46 484.0h44M94 484.0h19M153 484.0h14M207 484.0h20M235 484.0h28M303 484.0h23M340 484.0h54M398 484.0h21M433 484.0h37M478 484.0h19M522 484.0h34M581 484.0h39M660 484.0h43M711 484.0h49M800 484.0h22M826 484.0h43M869 484.0h25M934 484.0h22M981 484.0h28M1034 484.0h14M1048 484.0h29M1081 484.0h44M1150 484.0h24M1199 484.0h17M1230 484.0h12M1250 484.0h17M1271 484.0h11M1296 484.0h14M1324 484.0h44M1376 484.0h45M1446 484.0h16M1462 484.0h53M1529 484.0h45M1614 484.0h13M1652 484.0h28M1705 484.0h45M1790 484.0h20M1850 484.0h42M1932 484.0h21M1957 484.0h49M2014 484.0h23M2051 484.0h50M2126 484.0h32M20 484.0v19M117 484.0v19M168 484.0v19M224 484.0v19M278 484.0v12M350 484.0v8M395 484.0v19M453 484.0v8M478 484.0v19M549 484.0v19M616 484.0v12M688 484.0v12M746 484.0v19M850 484.0v12M947 484.0v8M1009 484.0v19M1048 484.0v19M1095 484.0v8M1157 484.0v19M1241 484.0v19M1321 484.0v19M1363 484.0v19M1416 484.0v12M1464 484.0v12M1518 484.0v19M1607 484.0v19M1671 484.0v8M1732 484.0v8M1809 484.0v12M1836 484.0v12M1890 484.0v8M1955 484.0v8M1996 484.0v19M2024 484.0v19M2068 484.0v19M2125 484.0v8M-4 503.0h10M14 503.0h10M24 503.0h21M70 503.0h39M117 503.0h25M150 503.0h13M203 503.0h31M242 503.0h49M295 503.0h37M372 503.0h52M432 503.0h15M472 503.0h41M517 503.0h20M562 503.0h53M615 503.0h51M706 503.0h46M756 503.0h40M804 503.0h35M864 503.0h47M936 503.0h55M1005 503.0h34M1053 503.0h31M1124 503.0h21M1170 503.0h31M1205 503.0h25M1244 503.0h23M1281 503.0h29M1310 503.0h49M1359 503.0h47M1406 503.0h39M1485 503.0h47M1532 503.0h48M1588 503.0h15M1617 503.0h34M1691 503.0h14M1705 503.0h15M1728 503.0h29M1797 503.0h28M1825 503.0h15M1854 503.0h50M1904 503.0h38M1982 503.0h46M2032 503.0h22M2058 503.0h17M2100 503.0h43M25 503.0v19M93 503.0v12M182 503.0v8M292 503.0v19M381 503.0v19M422 503.0v19M464 503.0v19M490 503.0v19M579 503.0v19M678 503.0v19M775 503.0v19M842 503.0v19M928 503.0v19M979 503.0v19M1044 503.0v19M1135 503.0v8M1210 503.0v8M1245 503.0v19M1341 503.0v19M1367 503.0v19M1395 503.0v12M1435 503.0v19M1511 503.0v12M1599 503.0v8M1630 503.0v8M1726 503.0v19M1765 503.0v19M1838 503.0v19M1948 503.0v19M2023 503.0v8M2118 503.0v19M-3 524.0h16M13 524.0h50M77 524.0h12M103 524.0h22M125 524.0h39M168 524.0h26M219 524.0h40M259 524.0h49M308 524.0h22M330 524.0h44M414 524.0h26M444 524.0h49M497 524.0h52M553 524.0h16M583 524.0h10M601 524.0h14M615 524.0h47M702 524.0h23M725 524.0h17M756 524.0h50M846 524.0h37M923 524.0h54M981 524.0h21M1006 524.0h50M1081 524.0h28M1149 524.0h48M1222 524.0h41M1263 524.0h39M1342 524.0h36M1392 524.0h16M1433 524.0h13M1454 524.0h54M1512 524.0h16M1553 524.0h38M1591 524.0h46M1645 524.0h23M1668 524.0h44M1752 524.0h34M1826 524.0h51M1877 524.0h24M1909 524.0h55M1972 524.0h15M2001 524.0h10M2011 524.0h49M2074 524.0h41M36 524.0v19M117 524.0v19M200 524.0v19M226 524.0v8M326 524.0v19M362 524.0v19M461 524.0v19M563 524.0v19M610 524.0v19M673 524.0v8M749 524.0v19M822 524.0v19M849 524.0v19M907 524.0v19M949 524.0v12M1016 524.0v19M1083 524.0v19M1167 524.0v19M1263 524.0v8M1308 524.0v19M1376 524.0v19M1446 524.0v8M1487 524.0v8M1549 524.0v19M1577 524.0v19M1610 524.0v19M1695 524.0v12M1760 524.0v19M1795 524.0v19M1845 524.0v19M1935 524.0v12M2039 524.0v19M2111 524.0v12M-19 543.0h16M11 543.0h15M30 543.0h54M92 543.0h15M115 543.0h49M172 543.0h51M248 543.0h29M281 543.0h50M356 543.0h52M433 543.0h11M448 543.0h17M505 543.0h15M534 543.0h19M567 543.0h38M609 543.0h34M643 543.0h55M738 543.0h25M788 543.0h42M844 543.0h47M891 543.0h15M920 543.0h22M956 543.0h25M981 543.0h15M1010 543.0h47M1082 543.0h25M1121 543.0h12M1158 543.0h27M1193 543.0h53M1271 543.0h17M1296 543.0h17M1338 543.0h38M1390 543.0h50M1444 543.0h48M1492 543.0h48M1554 543.0h19M1573 543.0h26M1607 543.0h14M1661 543.0h29M1690 543.0h42M1757 543.0h47M1829 543.0h53M1886 543.0h21M1921 543.0h46M1975 543.0h47M2036 543.0h54M2090 543.0h42M6 543.0v19M40 543.0v19M65 543.0v12M169 543.0v8M232 543.0v8M303 543.0v19M408 543.0v19M437 543.0v19M483 543.0v12M587 543.0v12M650 543.0v19M680 543.0v19M728 543.0v8M758 543.0v12M842 543.0v8M951 543.0v19M1053 543.0v19M1086 543.0v19M1138 543.0v19M1198 543.0v12M1272 543.0v19M1357 543.0v19M1394 543.0v19M1491 543.0v19M1596 543.0v19M1698 543.0v8M1775 543.0v12M1835 543.0v19M1883 543.0v19M1908 543.0v8M1989 543.0v19M2044 543.0v19M2104 543.0v12M-8 564.0h33M33 564.0h25M98 564.0h16M128 564.0h12M140 564.0h37M202 564.0h17M223 564.0h28M259 564.0h31M294 564.0h38M336 564.0h23M367 564.0h49M430 564.0h37M467 564.0h49M524 564.0h44M576 564.0h17M618 564.0h48M706 564.0h31M741 564.0h48M814 564.0h31M859 564.0h27M886 564.0h25M936 564.0h31M1007 564.0h50M1082 564.0h24M1110 564.0h18M1142 564.0h50M1196 564.0h34M1255 564.0h54M1323 564.0h16M1353 564.0h38M1395 564.0h48M1483 564.0h35M1543 564.0h55M1623 564.0h34M1682 564.0h21M1728 564.0h32M1785 564.0h24M1834 564.0h42M1901 564.0h52M1993 564.0h20M2053 564.0h37M2130 564.0h26M36 564.0v8M136 564.0v12M207 564.0v8M248 564.0v8M341 564.0v19M416 564.0v19M497 564.0v19M530 564.0v19M624 564.0v8M676 564.0v12M734 564.0v19M827 564.0v8M870 564.0v19M920 564.0v8M978 564.0v12M1018 564.0v12M1109 564.0v8M1145 564.0v19M1190 564.0v19M1284 564.0v19M1390 564.0v8M1455 564.0v19M1540 564.0v8M1617 564.0v19M1642 564.0v8M1749 564.0v8M1819 564.0v19M1858 564.0v19M1905 564.0v19M1983 564.0v19M2059 564.0v8M-1 585.0h22M35 585.0h52M95 585.0h52M172 585.0h11M187 585.0h18M213 585.0h22M275 585.0h21M300 585.0h25M325 585.0h23M373 585.0h15M402 585.0h16M443 585.0h20M471 585.0h10M481 585.0h51M546 585.0h29M575 585.0h16M591 585.0h12M607 585.0h26M633 585.0h32M679 585.0h20M724 585.0h53M785 585.0h38M831 585.0h36M871 585.0h44M919 585.0h54M977 585.0h24M1026 585.0h18M1048 585.0h19M1071 585.0h16M1101 585.0h53M1179 585.0h41M1224 585.0h44M1268 585.0h31M1299 585.0h39M1346 585.0h41M1387 585.0h16M1411 585.0h13M1432 585.0h27M1484 585.0h44M1542 585.0h24M1566 585.0h44M1618 585.0h50M1676 585.0h25M1715 585.0h25M1744 585.0h22M1766 585.0h13M1793 585.0h46M1847 585.0h50M1905 585.0h13M1943 585.0h31M2014 585.0h28M2046 585.0h48M2094 585.0h52M34 585.0v19M101 585.0v19M190 585.0v19M293 585.0v12M387 585.0v19M477 585.0v12M523 585.0v19M562 585.0v19M652 585.0v12M758 585.0v12M856 585.0v12M959 585.0v8M1003 585.0v19M1106 585.0v8M1145 585.0v12M1254 585.0v8M1358 585.0v19M1385 585.0v12M1428 585.0v12M1487 585.0v19M1589 585.0v19M1687 585.0v8M1734 585.0v19M1807 585.0v12M1857 585.0v19M1892 585.0v8M1953 585.0v19M2045 585.0v8M2077 585.0v19M2104 585.0v12M0 604.0h31M45 604.0h31M116 604.0h44M200 604.0h40M254 604.0h13M275 604.0h18M307 604.0h40M351 604.0h43M394 604.0h36M470 604.0h54M564 604.0h11M589 604.0h16M630 604.0h15M685 604.0h49M748 604.0h54M806 604.0h28M874 604.0h39M938 604.0h51M1029 604.0h15M1044 604.0h20M1064 604.0h51M1129 604.0h21M1158 604.0h28M1226 604.0h21M1287 604.0h17M1308 604.0h17M1325 604.0h20M1349 604.0h44M1393 604.0h33M1440 604.0h38M1503 604.0h21M1538 604.0h44M1582 604.0h24M1631 604.0h26M1657 604.0h54M1719 604.0h51M1770 604.0h28M1802 604.0h10M1837 604.0h24M1861 604.0h18M1904 604.0h31M1949 604.0h55M2018 604.0h12M2030 604.0h54M2084 604.0h12M2121 604.0h46M13 604.0v19M53 604.0v19M154 604.0v19M224 604.0v8M278 604.0v19M311 604.0v19M360 604.0v12M388 604.0v8M418 604.0v19M524 604.0v19M573 604.0v8M652 604.0v8M707 604.0v8M746 604.0v19M821 604.0v8M885 604.0v19M983 604.0v19M1055 604.0v12M1158 604.0v19M1193 604.0v19M1267 604.0v19M1304 604.0v19M1368 604.0v19M1418 604.0v8M1490 604.0v19M1581 604.0v19M1688 604.0v8M1751 604.0v19M1813 604.0v19M1854 604.0v12M1933 604.0v19M1992 604.0v19M2020 604.0v8M2070 604.0v19M-1 625.0h41M40 625.0h47M101 625.0h39M144 625.0h30M188 625.0h43M231 625.0h28M299 625.0h40M364 625.0h46M418 625.0h11M443 625.0h42M489 625.0h38M527 625.0h20M587 625.0h34M621 625.0h23M652 625.0h23M675 625.0h40M755 625.0h19M774 625.0h11M785 625.0h48M841 625.0h49M904 625.0h12M930 625.0h23M978 625.0h48M1030 625.0h25M1080 625.0h10M1094 625.0h37M1156 625.0h50M1231 625.0h43M1299 625.0h38M1377 625.0h38M1429 625.0h30M1473 625.0h12M1489 625.0h55M1548 625.0h20M1572 625.0h12M1588 625.0h37M1625 625.0h10M1643 625.0h15M1666 625.0h51M1742 625.0h12M1754 625.0h27M1781 625.0h43M1824 625.0h50M1888 625.0h18M1914 625.0h37M1976 625.0h40M2056 625.0h37M2107 625.0h53M1 625.0v19M91 625.0v8M138 625.0v12M178 625.0v19M279 625.0v19M367 625.0v12M402 625.0v19M472 625.0v8M532 625.0v12M588 625.0v8M684 625.0v8M750 625.0v8M785 625.0v19M832 625.0v19M868 625.0v19M954 625.0v19M994 625.0v8M1096 625.0v8M1135 625.0v12M1239 625.0v19M1297 625.0v19M1346 625.0v8M1447 625.0v8M1506 625.0v8M1547 625.0v19M1593 625.0v19M1690 625.0v19M1761 625.0v19M1861 625.0v19M1955 625.0v19M2014 625.0v19M2103 625.0v8M-7 646.0h55M62 646.0h34M110 646.0h52M170 646.0h49M259 646.0h32M299 646.0h19M326 646.0h38M364 646.0h30M434 646.0h21M463 646.0h51M539 646.0h53M600 646.0h14M639 646.0h50M693 646.0h39M757 646.0h22M804 646.0h32M876 646.0h40M956 646.0h26M1022 646.0h24M1086 646.0h55M1141 646.0h26M1207 646.0h49M1256 646.0h42M1306 646.0h50M1370 646.0h32M1406 646.0h25M1439 646.0h23M1487 646.0h32M1533 646.0h47M1588 646.0h41M1629 646.0h15M1652 646.0h50M1742 646.0h18M1760 646.0h40M1800 646.0h15M1815 646.0h43M1862 646.0h38M1914 646.0h25M1939 646.0h18M1961 646.0h30M2016 646.0h20M2044 646.0h35M2119 646.0h42M14 646.0v19M109 646.0v12M175 646.0v19M258 646.0v12M303 646.0v19M384 646.0v19M451 646.0v19M488 646.0v12M553 646.0v19M654 646.0v19M721 646.0v19M817 646.0v12M922 646.0v8M1032 646.0v19M1137 646.0v19M1223 646.0v19M1261 646.0v19M1369 646.0v19M1467 646.0v19M1501 646.0v12M1567 646.0v19M1610 646.0v8M1701 646.0v8M1747 646.0v19M1816 646.0v19M1904 646.0v19M1983 646.0v12M2017 646.0v19M2085 646.0v8M2112 646.0v8M-16 666.0h38M30 666.0h21M55 666.0h33M96 666.0h22M122 666.0h44M170 666.0h27M205 666.0h48M278 666.0h37M340 666.0h55M403 666.0h10M453 666.0h45M506 666.0h54M574 666.0h32M631 666.0h54M685 666.0h23M722 666.0h42M789 666.0h20M809 666.0h54M871 666.0h23M908 666.0h43M951 666.0h55M1031 666.0h15M1050 666.0h44M1094 666.0h15M1134 666.0h55M1203 666.0h18M1246 666.0h35M1321 666.0h31M1356 666.0h37M1401 666.0h19M1460 666.0h20M1505 666.0h45M1575 666.0h15M1598 666.0h25M1627 666.0h45M1712 666.0h37M1753 666.0h49M1827 666.0h35M1902 666.0h52M1954 666.0h55M2017 666.0h43M2060 666.0h10M2070 666.0h38M2116 666.0h24M28 666.0v19M127 666.0v19M180 666.0v19M247 666.0v19M279 666.0v12M379 666.0v19M467 666.0v19M513 666.0v19M547 666.0v12M626 666.0v8M660 666.0v19M712 666.0v8M790 666.0v19M878 666.0v19M952 666.0v19M1039 666.0v12M1072 666.0v19M1180 666.0v12M1231 666.0v19M1327 666.0v19M1392 666.0v8M1474 666.0v19M1528 666.0v19M1553 666.0v19M1633 666.0v19M1686 666.0v8M1757 666.0v12M1860 666.0v8M1946 666.0v19M2046 666.0v19M2072 666.0v19M-13 687.0h18M9 687.0h21M70 687.0h31M109 687.0h18M141 687.0h45M186 687.0h15M209 687.0h54M271 687.0h46M357 687.0h50M447 687.0h50M501 687.0h55M570 687.0h44M639 687.0h28M681 687.0h39M760 687.0h11M811 687.0h53M868 687.0h53M921 687.0h29M990 687.0h29M1019 687.0h32M1051 687.0h13M1068 687.0h27M1103 687.0h48M1165 687.0h41M1231 687.0h36M1275 687.0h55M1344 687.0h50M1408 687.0h33M1441 687.0h52M1533 687.0h46M1579 687.0h32M1619 687.0h22M1645 687.0h28M1698 687.0h15M1713 687.0h47M1785 687.0h18M1828 687.0h54M1886 687.0h51M1937 687.0h27M2004 687.0h25M2043 687.0h28M2096 687.0h48M12 687.0v8M90 687.0v19M172 687.0v12M274 687.0v19M320 687.0v19M429 687.0v19M471 687.0v19M532 687.0v19M634 687.0v19M739 687.0v12M822 687.0v19M886 687.0v19M968 687.0v19M1041 687.0v12M1138 687.0v19M1237 687.0v19M1317 687.0v8M1418 687.0v8M1503 687.0v8M1531 687.0v8M1565 687.0v19M1642 687.0v8M1743 687.0v19M1800 687.0v19M1903 687.0v12M1948 687.0v19M1990 687.0v12M2079 687.0v19M2118 687.0v19" stroke="#fff" stroke-width="1" fill="none" opacity=".13" transform="translate(0.5,1.7)"/></g>
<!-- top right green lines -->
<g stroke="#6f8d1b" stroke-width="7" fill="none"><path d="M1949.6 -5L2018.2 70"/><path d="M1992.4 -5L1945.3 44.7" /></g>
<clipPath id="cl3"><rect x="2090" y="-5" width="41" height="40"/></clipPath>
<path d="M2106 -5L2135.800 26" stroke="#9bc21a" stroke-width="7" fill="none" clip-path="url(#cl3)"/>
<path d="M2096.1 57L2104.500 66H2087.700Z" fill="#8aab1c"/>
<!-- bottom right white shapes -->
<path d="M1480 645V662.5L1656 699H1704.5V645Z" fill="#e9e9e9"/><g clip-path="url(#wclip)"><rect x="1400" y="640" width="320" height="60" fill="#333" filter="url(#blot2)" opacity=".7"/></g>
<path d="M1420 650L1459.5 659.5V645H1420Z" fill="#e8e8e8"/>
<!-- desktop icons -->
<g><path d="M905.5 571H922V592.500L924 593.500V604.500H905.500Z" fill="#f3d47c"/><path d="M905.500 571H922V604.500H905.500Z" fill="#f7dc8c" opacity=".6"/><path d="M897 571L905.800 578.500V611L897 604Z" fill="#fde9ae"/></g>
<g><path d="M2066 -2H2088V22L2070 24Z" fill="#f4f4f4"/><path d="M2081 -2H2088.500V21L2081 19Z" fill="#fafafa" stroke="#d8d8d8" stroke-width=".6"/><path d="M2066 -2H2079.500V21.500L2066 23Z" fill="#fdfdfd"/><path d="M2057 -2H2066V24L2057 16.500Z" fill="#f8d77a"/><path d="M2069 3h2v5h-2z" fill="#5a7a5a"/></g>
</svg>
<div class="a" style="left:1020px;top:65px;width:1119px;height:586px;background:#fff;"></div>
<div class="a" style="left:1020px;top:95px;width:56px;height:23px;background:#0f65ba;"></div>
<div class="a" style="left:1020px;top:118px;width:1119px;height:1px;background:#dadbdc;"></div>
<div class="a" style="left:1126px;top:124px;width:652px;height:30px;background:#fff;box-sizing:border-box;border:1px solid #d9d9d9;"></div>
<div class="a" style="left:1747px;top:125px;width:1px;height:28px;background:#d9d9d9;"></div>
<div class="a" style="left:1790px;top:124px;width:342px;height:30px;background:#fff;box-sizing:border-box;border:1px solid #d9d9d9;"></div>
<div class="a" style="left:1179px;top:160px;width:1px;height:468px;background:#f0f0f0;"></div>
<div class="a" style="left:1020px;top:241px;width:157px;height:23px;background:#d9d9d9;"></div>
<div class="a" style="left:1506px;top:161px;width:1px;height:25px;background:#e5e5e5;"></div>
<div class="a" style="left:1650px;top:161px;width:1px;height:25px;background:#e5e5e5;"></div>
<div class="a" style="left:1770px;top:161px;width:1px;height:25px;background:#e5e5e5;"></div>
<div class="a" style="left:1850px;top:161px;width:1px;height:25px;background:#e5e5e5;"></div>
<div class="a" style="left:2128px;top:161px;width:17px;height:467px;background:#f0f0f0;"></div>
<div class="a" style="left:2128px;top:178px;width:17px;height:217px;background:#cdcdcd;"></div>
<svg style="left:2131px;top:167px" width="9" height="6" viewBox="0 0 9 6"><path d="M0.7 5L4.5 1.2L8.300 5" stroke="#505050" stroke-width="1.500" fill="none"/></svg>
<svg style="left:2131px;top:617px" width="9" height="6" viewBox="0 0 9 6"><path d="M0.7 1L4.5 4.800L8.300 1" stroke="#505050" stroke-width="1.500" fill="none"/></svg>
<svg style="left:0;top:0" width="2139" height="628" viewBox="0 0 2139 628"><g transform="translate(1200.5,194.8)"><path d="M0.5 0.500H11.500V15.500H0.500Z" fill="#ffe8a0" stroke="#f0c85a"/><path d="M10.500 9H12.800V15.500H10.500Z" fill="#ffe08a" stroke="#f0c85a" stroke-width=".9"/></g><g transform="translate(1201,215.8)"><path d="M0.5 0.500H8L11.500 4V15.500H0.500Z" fill="#fff" stroke="#8c8c8c" stroke-width="1"/><path d="M8 0.500V4H11.500" fill="none" stroke="#8c8c8c" stroke-width="1"/></g><g transform="translate(1201,236.8)"><path d="M0.5 0.500H8L11.500 4V15.500H0.500Z" fill="#fff" stroke="#8c8c8c" stroke-width="1"/><path d="M8 0.500V4H11.500" fill="none" stroke="#8c8c8c" stroke-width="1"/></g><g transform="translate(1201,257.8)"><path d="M0.5 0.500H8L11.500 4V15.500H0.500Z" fill="#fff" stroke="#8c8c8c" stroke-width="1"/><path d="M8 0.500V4H11.500" fill="none" stroke="#8c8c8c" stroke-width="1"/></g><g transform="translate(1201,278.8)"><path d="M0.5 0.500H8L11.500 4V15.500H0.500Z" fill="#fff" stroke="#8c8c8c" stroke-width="1"/><path d="M8 0.500V4H11.500" fill="none" stroke="#8c8c8c" stroke-width="1"/></g><g transform="translate(1201,299.8)"><path d="M0.5 0.500H8L11.500 4V15.500H0.500Z" fill="#fff" stroke="#8c8c8c" stroke-width="1"/><path d="M8 0.500V4H11.500" fill="none" stroke="#8c8c8c" stroke-width="1"/></g><g transform="translate(1201,320.8)"><path d="M0.5 0.500H8L11.500 4V15.500H0.500Z" fill="#fff" stroke="#8c8c8c" stroke-width="1"/><path d="M8 0.500V4H11.500" fill="none" stroke="#8c8c8c" stroke-width="1"/></g><g transform="translate(1201,341.8)"><path d="M0.5 0.500H8L11.500 4V15.500H0.500Z" fill="#fff" stroke="#8c8c8c" stroke-width="1"/><path d="M8 0.500V4H11.500" fill="none" stroke="#8c8c8c" stroke-width="1"/></g><g transform="translate(1201,362.8)"><path d="M0.5 0.500H8L11.500 4V15.500H0.500Z" fill="#fff" stroke="#8c8c8c" stroke-width="1"/><path d="M8 0.500V4H11.500" fill="none" stroke="#8c8c8c" stroke-width="1"/></g><g transform="translate(1201,383.8)"><path d="M0.5 0.500H8L11.500 4V15.500H0.500Z" fill="#fff" stroke="#8c8c8c" stroke-width="1"/><path d="M8 0.500V4H11.500" fill="none" stroke="#8c8c8c" stroke-width="1"/></g><g transform="translate(1201,404.8)"><path d="M0.5 0.500H8L11.500 4V15.500H0.500Z" fill="#fff" stroke="#8c8c8c" stroke-width="1"/><path d="M8 0.500V4H11.500" fill="none" stroke="#8c8c8c" stroke-width="1"/></g><g transform="translate(1201,425.8)"><path d="M0.5 0.500H8L11.500 4V15.500H0.500Z" fill="#fff" stroke="#8c8c8c" stroke-width="1"/><path d="M8 0.500V4H11.500" fill="none" stroke="#8c8c8c" stroke-width="1"/></g><g transform="translate(1199.5,446.8)"><path d="M2.500 2H14.500L13 15.500H0.800Z" fill="#9ed4f0" stroke="#5c9cc4" stroke-width=".8"/><path d="M3 5H13.800M2.800 7.500H13.500M2.500 10H13.200M2.200 12.500H13" stroke="#d8f0fc" stroke-width=".8"/><path d="M3.500 .8V3M5.500 .8V3M7.500 .8V3M9.500 .8V3M11.500 .8V3M13.500 .8V3" stroke="#55606e" stroke-width=".9"/><path d="M13 15.500l1.500-13.500l.8 .5l-1.300 13z" fill="#c9a66b"/></g><g transform="translate(1201,467.8)"><path d="M0.5 0.500H8L11.500 4V15.500H0.500Z" fill="#fff" stroke="#8c8c8c" stroke-width="1"/><path d="M8 0.500V4H11.500" fill="none" stroke="#8c8c8c" stroke-width="1"/></g><g transform="translate(1199.5,488.8)"><path d="M2.500 2H14.500L13 15.500H0.800Z" fill="#9ed4f0" stroke="#5c9cc4" stroke-width=".8"/><path d="M3 5H13.800M2.800 7.500H13.500M2.500 10H13.200M2.200 12.500H13" stroke="#d8f0fc" stroke-width=".8"/><path d="M3.500 .8V3M5.500 .8V3M7.500 .8V3M9.500 .8V3M11.500 .8V3M13.500 .8V3" stroke="#55606e" stroke-width=".9"/><path d="M13 15.500l1.500-13.500l.8 .5l-1.300 13z" fill="#c9a66b"/></g><g transform="translate(1201,509.8)"><path d="M0.5 0.500H8L11.500 4V15.500H0.500Z" fill="#fff" stroke="#8c8c8c" stroke-width="1"/><path d="M8 0.500V4H11.500" fill="none" stroke="#8c8c8c" stroke-width="1"/></g><g transform="translate(1201,530.8)"><path d="M0.5 0.500H8L11.500 4V15.500H0.500Z" fill="#fff" stroke="#8c8c8c" stroke-width="1"/><path d="M8 0.500V4H11.500" fill="none" stroke="#8c8c8c" stroke-width="1"/></g><g transform="translate(1201,551.8)"><path d="M0.5 0.500H8L11.500 4V15.500H0.500Z" fill="#fff" stroke="#8c8c8c" stroke-width="1"/><path d="M8 0.500V4H11.500" fill="none" stroke="#8c8c8c" stroke-width="1"/></g><g transform="translate(1201,572.8)"><path d="M0.5 0.500H8L11.500 4V15.500H0.500Z" fill="#fff" stroke="#8c8c8c" stroke-width="1"/><path d="M8 0.500V4H11.500" fill="none" stroke="#8c8c8c" stroke-width="1"/></g><g transform="translate(1199.5,593.8)"><path d="M2.500 2H14.500L13 15.500H0.800Z" fill="#9ed4f0" stroke="#5c9cc4" stroke-width=".8"/><path d="M3 5H13.800M2.800 7.500H13.500M2.500 10H13.200M2.200 12.500H13" stroke="#d8f0fc" stroke-width=".8"/><path d="M3.500 .8V3M5.500 .8V3M7.500 .8V3M9.500 .8V3M11.500 .8V3M13.500 .8V3" stroke="#55606e" stroke-width=".9"/><path d="M13 15.500l1.500-13.500l.8 .5l-1.300 13z" fill="#c9a66b"/></g><g transform="translate(1201,614.8)"><path d="M0.5 0.500H8L11.500 4V15.500H0.500Z" fill="#fff" stroke="#8c8c8c" stroke-width="1"/><path d="M8 0.500V4H11.500" fill="none" stroke="#8c8c8c" stroke-width="1"/></g></svg>
<svg style="left:0;top:0" width="2139" height="160" viewBox="0 0 2139 160">
<g transform="translate(1030,71.500)"><path d="M0.5 0.500H11.500V15.500H0.500Z" fill="#ffe8a0" stroke="#f0c85a"/><path d="M10.500 9H12.800V15.500H10.500Z" fill="#ffe08a" stroke="#f0c85a" stroke-width=".9"/></g>
<path d="M1051.500 74V84.500M1121.500 74V84.500" stroke="#a6a6a6" stroke-width="1"/>
<g transform="translate(1063,72)"><path d="M0.500 0.500H8L11.500 4V15.500H0.500Z" fill="#fff" stroke="#7a7a7a"/><path d="M8 0.500V4H11.500" fill="none" stroke="#7a7a7a"/><path d="M2.800 9.500L5 12L9.200 6.500" stroke="#e8501c" stroke-width="1.400" fill="none"/></g>
<g transform="translate(1085,72)"><path d="M0.5 0.500H11.500V15.500H0.500Z" fill="#ffe8a0" stroke="#f0c85a"/><path d="M10.500 9H12.800V15.500H10.500Z" fill="#ffe08a" stroke="#f0c85a" stroke-width=".9"/></g>
<path d="M1106 78.500H1113" stroke="#222" stroke-width="1"/><path d="M1106 81H1113L1109.500 84.500Z" fill="#222"/>
<g stroke="#7a7a7a" stroke-width="1" fill="none"><path d="M2025 79.500H2035"/><rect x="2070.500" y="74.500" width="9" height="9"/><path d="M2116 74L2126 84M2126 74L2116 84"/></g>
<path d="M2107.500 104L2111.500 108L2115.500 104" stroke="#7a7a7a" stroke-width="1" fill="none"/>
<circle cx="2133" cy="105.700" r="8.200" fill="#0a64c8"/>
<g stroke="#6b6b6b" stroke-width="1.500" fill="none"><path d="M1045.500 139H1034M1039 133.500L1033.500 139L1039 144.500"/><path d="M1063 139H1074.500M1069.500 133.500L1075 139L1069.500 144.500" stroke="#8a8a8a"/><path d="M1113 145V134M1107.500 139.500L1113 134L1118.500 139.500"/></g>
<path d="M1090 137.500L1092.800 140.300L1095.600 137.500" stroke="#8a8a8a" stroke-width="1.200" fill="none"/>
<g transform="translate(1131,130)"><path d="M0.5 0.500H11.500V15.500H0.500Z" fill="#ffe8a0" stroke="#f0c85a"/><path d="M10.500 9H12.800V15.500H10.500Z" fill="#ffe08a" stroke="#f0c85a" stroke-width=".9"/></g>
<path d="M1153.400 135.500L1151 138L1153.400 140.500M1157.400 135.500L1155 138L1157.400 140.500" stroke="#333" stroke-width="1" fill="none"/>
<g stroke="#5a5a5a" stroke-width="1.400" fill="none"><path d="M1209.2 137L1211.8 139.600L1209.2 142.200"/><path d="M1251.7 137L1254.3 139.600L1251.7 142.200"/><path d="M1344.2 137L1346.8 139.600L1344.2 142.200"/><path d="M1428.2 137L1430.8 139.600L1428.2 142.200"/><path d="M1489.2 137L1491.8 139.600L1489.2 142.200"/><path d="M1549.2 137L1551.8 139.600L1549.2 142.200"/></g>
<path d="M1729 137.500L1733 141.500L1737 137.500" stroke="#444" stroke-width="1.600" fill="none"/>
<path d="M1766.300 136.200A4.700 4.700 0 1 1 1762.500 134.800" stroke="#555" stroke-width="1.300" fill="none"/><path d="M1762 132.300L1765.300 134.900L1762 137.500" stroke="#555" stroke-width="1.200" fill="none"/>
<circle cx="1813" cy="137" r="4" stroke="#7a7a7a" stroke-width="1.100" fill="none"/><path d="M1810.200 140L1805.500 144.700" stroke="#7a7a7a" stroke-width="1.200"/>
<path d="M1345.500 165L1349.500 161L1353.500 165" stroke="#8a8a8a" stroke-width="1" fill="none"/>
</svg>
<svg style="left:0;top:0" width="1200" height="300" viewBox="0 0 1200 300">
<path d="M1053.500 183l1.700 3.800l4.200 .4l-3.200 2.800l1 4.100l-3.700-2.200l-3.700 2.200l1-4.100l-3.200-2.800l4.200-.4z" fill="#2f8ae0"/><path d="M1045 191.500l4-2M1044.500 194l5.500-2.500M1047 187.500l2-.5" stroke="#6ab0f0" stroke-width="1"/>
<g transform="translate(1044 216) scale(.92) translate(-1044 -216.300)"><path d="M1047.500 226a3.800 3.800 0 0 1 -.3-7.500a5.200 5.200 0 0 1 9.600-1.500a4.500 4.500 0 0 1 3 8.200q-.8 .8-2 .8z" fill="#1a84dc"/><path d="M1047.200 218.500a5.200 5.200 0 0 1 9.600-1.500q-4 2-5 6z" fill="#0f6cc4"/></g>
<rect x="1045" y="246.500" width="14" height="10" fill="#4fb4f0" stroke="#3a7cae" stroke-width="1"/><rect x="1046.500" y="248" width="11" height="7" fill="#7fd0fa"/><path d="M1049 258.500h6M1045 260.500h14" stroke="#8a98a8" stroke-width="1"/>
<circle cx="1055" cy="282.500" r="5" fill="#3f9ae0"/><path d="M1052 279.500q3-2 6 0q1 3-1 6q-3 1-5-1z" fill="#8fd088" opacity=".8"/><rect x="1044.500" y="283.500" width="10" height="6.500" fill="#5ab6f4" stroke="#3a7cae" stroke-width=".9"/><path d="M1049.500 290v2M1046.500 292.500h6" stroke="#7a8898" stroke-width="1"/>
</svg>
<div class="a" style="left:15px;top:196px;width:1001px;height:333px;background:#fff;box-shadow:0 5px 18px rgba(0,0,0,.5);outline:1px solid rgba(40,40,40,.55);"></div>
<div class="a" style="left:15px;top:245px;width:1000px;height:1px;background:#f0f0f0;"></div>
<div class="a" style="left:15px;top:336px;width:1001px;height:1px;background:#dcdcdc;"></div>
<div class="a" style="left:19px;top:248px;width:2px;height:87px;background:repeating-linear-gradient(#b8b8b8 0 1px,#fff 1px 3px);"></div>
<div class="a" style="left:1011px;top:309px;width:2px;height:26px;background:repeating-linear-gradient(#b8b8b8 0 1px,#fff 1px 3px);"></div>
<div class="a" style="left:506px;top:250px;width:1px;height:54px;background:#8c8c8c;"></div>
<div class="a" style="left:15px;top:338px;width:1001px;height:167px;background:#fff;box-sizing:border-box;border:1px solid #828790;"></div>
<div class="a" style="left:16px;top:364px;width:121px;height:140px;background:#f7f7f7;"></div>
<div class="a" style="left:136px;top:340px;width:1px;height:24px;background:#e5e5e5;"></div>
<div class="a" style="left:216px;top:340px;width:1px;height:24px;background:#e5e5e5;"></div>
<div class="a" style="left:296px;top:340px;width:1px;height:24px;background:#e5e5e5;"></div>
<div class="a" style="left:416px;top:340px;width:1px;height:24px;background:#e5e5e5;"></div>
<div class="a" style="left:516px;top:340px;width:1px;height:24px;background:#e5e5e5;"></div>
<div class="a" style="left:586px;top:340px;width:1px;height:24px;background:#e5e5e5;"></div>
<div class="a" style="left:37px;top:383px;width:550px;height:19px;background:#0078d7;"></div>
<div class="a" style="left:15px;top:505px;width:1001px;height:24px;background:#f0f0f0;"></div>
<div class="a" style="left:15px;top:506px;width:1001px;height:1px;background:#dadada;"></div>
<div class="a" style="left:56px;top:508px;width:1px;height:20px;background:#d0d0d0;"></div>
<div class="a" style="left:57px;top:508px;width:1px;height:20px;background:#fff;"></div>
<div class="a" style="left:535px;top:508px;width:1px;height:20px;background:#d0d0d0;"></div>
<div class="a" style="left:536px;top:508px;width:1px;height:20px;background:#fff;"></div>
<svg style="left:1006px;top:519px" width="9" height="9"><rect x="6" y="0" width="2" height="2" fill="#b4b4b4"/><rect x="3" y="3" width="2" height="2" fill="#b4b4b4"/><rect x="6" y="3" width="2" height="2" fill="#b4b4b4"/><rect x="0" y="6" width="2" height="2" fill="#b4b4b4"/><rect x="3" y="6" width="2" height="2" fill="#b4b4b4"/><rect x="6" y="6" width="2" height="2" fill="#b4b4b4"/></svg>
<svg style="left:23px;top:202px" width="16" height="16" viewBox="0 0 16 16">
<rect x="0" y="0" width="16" height="5" fill="#c8285a"/><rect x="0" y="5" width="16" height="5" fill="#4c54b8"/><rect x="0" y="10" width="16" height="5" fill="#1e9a3c"/>
<rect x="0" y="4.4" width="16" height="1" fill="#6a1838" opacity=".7"/><rect x="0" y="9.4" width="16" height="1" fill="#262a6a" opacity=".7"/><rect x="0" y="14.2" width="16" height="1" fill="#0d5a20" opacity=".8"/>
<rect x="6" y="0" width="4" height="15" fill="#f07820"/>
<rect x="5.3" y="5.5" width="5.4" height="4" rx="1" fill="#fff"/><rect x="7.2" y="6.5" width="1.6" height="3" fill="#e8e8f4"/>
<rect x="6.2" y="5" width="1" height="3.5" fill="#e03010"/><rect x="8.8" y="5" width="1" height="3.5" fill="#e03010"/>
<rect x="1" y="1" width="1" height="2.6" fill="#ffd820"/><rect x="1" y="6" width="1" height="2.6" fill="#ffd820"/><rect x="1" y="11" width="1" height="2.6" fill="#ffd820"/>
</svg>
<svg style="left:897px;top:205px" width="102" height="11" viewBox="0 0 102 11"><g stroke="#000" stroke-width="1" fill="none"><path d="M0 5.5H10"/><rect x="45.5" y="0.5" width="9" height="9"/><path d="M91 0L101 10M101 0L91 10" stroke-width="1.1"/></g></svg>
<svg style="left:31px;top:316px" width="12" height="13" viewBox="0 0 12 13"><path d="M6 12V1.5M1.5 6L6 1.5L10.5 6" stroke="#6e6e6e" stroke-width="1.5" fill="none"/></svg>
<svg style="left:73px;top:340px" width="9" height="5" viewBox="0 0 9 5"><path d="M0.5 4.5L4.5 0.5L8.5 4.5" stroke="#707070" stroke-width="1" fill="none"/></svg>
<svg style="left:23px;top:365px" width="13" height="16" viewBox="0 0 13 16"><path d="M0.5 0.500H11.500V15.500H0.500Z" fill="#ffe8a0" stroke="#f0c85a"/><path d="M10.500 9H12.800V15.500H10.500Z" fill="#ffe08a" stroke="#f0c85a" stroke-width=".9"/></svg>
<div class="a" style="left:21px;top:383px;width:16px;height:19px;background:#fff;"></div>
<svg style="left:22px;top:384px" width="16" height="17" viewBox="0 0 16 17">
<path d="M0.300 12.500V4.500H2.800V12.500Z" fill="#8fdc3c"/><path d="M1.300 6.500V10.500" stroke="#d8ffb0" stroke-width=".8"/>
<path d="M2.700 2.300H14.300V14.600L13.300 15.600H3.700L2.700 14.600Z" fill="#5b9edb" stroke="#3f7fc0" stroke-width=".7"/>
<path d="M3.500 5H13.500M3.500 7H13.500M3.500 9H13.500M3.500 11H13.500M3.500 13H13.500" stroke="#86bdea" stroke-width=".7"/>
<path d="M12.800 2.500V15.300" stroke="#8cc4f0" stroke-width=".8"/>
<path d="M3.800 0.300V2.600M5.800 0.300V2.600M7.800 0.300V2.600M9.800 0.300V2.600M11.800 0.300V2.600M13.600 0.300V2.600" stroke="#3c4c64" stroke-width=".9"/>
</svg>
<svg style="left:19px;top:512px" width="36" height="11" viewBox="0 0 36 11">
<rect x="0.5" y="1.5" width="15" height="7" rx="1.5" fill="#dfe5ec" stroke="#6f86a3"/><rect x="2.5" y="3.5" width="11" height="3" fill="#3a3f47"/>
<circle cx="29.5" cy="5" r="4.6" fill="#e4e4e4" stroke="#6b6b6b" stroke-width="1.3"/><circle cx="30.3" cy="5" r="1.6" fill="#fff" stroke="#7b7b7b" stroke-width=".8"/><path d="M19 4H26V6.5H24.5V8H22.5V6.5H21.5V8H19.5Z" fill="#7a7a7a"/></svg>
<svg style="left:0;top:0" width="1016" height="340" viewBox="0 0 1016 340"><defs>
<linearGradient id="gG" x1="0" x2="1"><stop offset="0" stop-color="#0b8a2c"/><stop offset=".35" stop-color="#3fd45e"/><stop offset="1" stop-color="#0c7a28"/></linearGradient>
<linearGradient id="gB" x1="0" x2="1"><stop offset="0" stop-color="#1a48c8"/><stop offset=".45" stop-color="#5aa2ff"/><stop offset="1" stop-color="#1a40b8"/></linearGradient>
<linearGradient id="gR" x1="0" x2="1"><stop offset="0" stop-color="#d81838"/><stop offset=".55" stop-color="#ff6a94"/><stop offset="1" stop-color="#d02858"/></linearGradient>
<linearGradient id="gBelt" x1="0" x2="0" y1="0" y2="1"><stop offset="0" stop-color="#ffc83a"/><stop offset=".5" stop-color="#f09418"/><stop offset="1" stop-color="#d87208"/></linearGradient>
<linearGradient id="gFold" x1="0" x2="0" y1="0" y2="1"><stop offset="0" stop-color="#b6defc"/><stop offset="1" stop-color="#62aaf2"/></linearGradient>
<linearGradient id="gFoldB" x1="0" x2="0" y1="0" y2="1"><stop offset="0" stop-color="#5c9cff"/><stop offset="1" stop-color="#3a74e8"/></linearGradient>
<linearGradient id="gSteel" x1="0" x2="1"><stop offset="0" stop-color="#8ea6c4"/><stop offset=".35" stop-color="#e4ecf6"/><stop offset="1" stop-color="#7e96b8"/></linearGradient>
<radialGradient id="gLens" cx=".5" cy=".35" r=".7"><stop offset="0" stop-color="#8aa0f8"/><stop offset=".5" stop-color="#3a78ee"/><stop offset="1" stop-color="#1448c8"/></radialGradient>
<radialGradient id="gInfo" cx=".5" cy=".5" r=".5"><stop offset="0" stop-color="#f4f6fa"/><stop offset=".8" stop-color="#d4dce8"/><stop offset="1" stop-color="#c2ccdc"/></radialGradient>
<radialGradient id="gVir" cx=".5" cy=".45" r=".55"><stop offset="0" stop-color="#4ee020"/><stop offset=".8" stop-color="#2cb810"/><stop offset="1" stop-color="#168c08"/></radialGradient>
<linearGradient id="gBub" x1="0" x2="1" y1="0" y2="1"><stop offset="0" stop-color="#c8d6ea"/><stop offset=".5" stop-color="#9fb4d2"/><stop offset="1" stop-color="#b8c8e0"/></linearGradient>
<linearGradient id="gBox" x1="0" x2="0" y1="0" y2="1"><stop offset="0" stop-color="#e08a58"/><stop offset=".4" stop-color="#f6b888"/><stop offset="1" stop-color="#f8a868"/></linearGradient>
<linearGradient id="gPage" x1="0" x2="1"><stop offset="0" stop-color="#d8d8d8"/><stop offset=".4" stop-color="#ffffff"/><stop offset="1" stop-color="#e0e0e0"/></linearGradient>
</defs>
<g>
<rect x="46" y="253" width="11.3" height="34" rx="1.5" fill="url(#gG)"/><rect x="57" y="253" width="11.3" height="34" rx="1.5" fill="url(#gB)"/><rect x="68" y="253" width="11.2" height="34" rx="1.5" fill="url(#gR)"/>
<rect x="47.3" y="255.3" width="8.6" height="2.6" fill="#ffd21e"/><rect x="58.3" y="255.3" width="8.6" height="2.6" fill="#ffd21e"/><rect x="69.3" y="255.3" width="8.6" height="2.6" fill="#ff9a1a"/>
<rect x="45" y="266.3" width="35" height="9.5" fill="url(#gBelt)"/>
<path d="M50 265.5h5v11h-5a6 6 0 0 1 0-11z" fill="#ffd860" opacity=".9"/><rect x="54.5" y="265" width="2.4" height="12" fill="#f2a020"/>
<rect x="62.8" y="264.3" width="8.5" height="13.4" rx="1" fill="none" stroke="#f0f0f4" stroke-width="2"/><rect x="62" y="263.6" width="10" height="14.8" rx="1.5" fill="none" stroke="#9aa0b0" stroke-width=".6"/>
<rect x="66" y="269.8" width="6" height="2.4" fill="#f4f4f8"/><circle cx="60.6" cy="271" r="1" fill="#5a3208"/>
</g>
<g>
<path d="M114 258a5 5 0 0 1 5-5h7c3 0 4.5 1.500 6.500 3.500s2.500 2.500 5.500 2.500h7a5 5 0 0 1 5 5v18h-36z" fill="url(#gFoldB)"/>
<rect x="116" y="262.4" width="30" height="9" fill="#fff"/><path d="M117 266.500h28" stroke="#c4c8d4" stroke-width="3" stroke-dasharray="1.200 2.800" stroke-dashoffset="-2"/><path d="M146.300 263v7" stroke="#9ab4ee" stroke-width="1"/>
<path d="M114 272a3.500 3.500 0 0 1 3.500 -3.500h29a3.500 3.500 0 0 1 3.500 3.500v10a5 5 0 0 1 -5 5h-26a5 5 0 0 1 -5 -5z" fill="url(#gFold)"/>
<path d="M114.500 272a3 3 0 0 1 3-3h29a3 3 0 0 1 3 3" stroke="#e8f6ff" stroke-width="1" fill="none"/>
<rect x="136" y="280" width="10" height="3" rx=".5" fill="#f02810"/>
</g>
<g>
<rect x="179" y="254" width="28" height="32" rx="2.500" fill="#e22430"/><rect x="179.500" y="254.500" width="27" height="31" rx="2" fill="none" stroke="#a81018" stroke-width=".8"/>
<path d="M181.500 258h23v20.500q-3 1.500-5.500 5.500h-17.500z" fill="url(#gPage)"/><path d="M204.500 278.500q-4 .5-5.500 5.500q5-1 5.500-5.500z" fill="#c8c0c0"/>
<rect x="185.500" y="253" width="16" height="8" rx="2" fill="#d8d8dc" stroke="#70707a" stroke-width=".9"/><rect x="187.500" y="254.800" width="12" height="2.400" rx="1" fill="#fff" stroke="#a03030" stroke-width=".5"/>
<rect x="184.500" y="263.500" width="6.500" height="6.500" fill="#f4f4f4" stroke="#c0a8a8" stroke-width=".7"/><rect x="184.500" y="274" width="6.500" height="6.500" fill="#f4f4f4" stroke="#c0a8a8" stroke-width=".7"/>
<path d="M184.500 267.500l2.800 2.800l8.200-6.800" stroke="#1c8a2a" stroke-width="2.200" fill="none"/>
<path d="M193.500 266.500h8M193.500 269h6M193.500 277h8M193.500 279.500h6" stroke="#a88080" stroke-width=".9"/>
</g>
<g>
<path d="M230 255.500q10-2.500 21 .800q11-3.300 21-.800v30.500h-42z" fill="#17a02c"/><path d="M230.500 256q10-2.500 20.500 .800q10.500-3.300 20.500-.800v29.500h-41z" fill="none" stroke="#0c6c1a" stroke-width=".8"/>
<path d="M232 257.300q9-2.200 19 1.200v25.500q-10-2.500-19-.800z" fill="url(#gPage)"/><path d="M270 257.300q-9-2.200-19 1.200v25.500q10-2.500 19-.800z" fill="url(#gPage)"/>
<path d="M234 260.300h13M234 263.300h13M234 266.300h13M234 269.300h13M234 272.300h13M234 275.300h13M234 278.300h13M261 260.300h7M261 263.300h7M254.500 269.300h13.500M254.500 272.300h13.500M254.500 275.300h13.500M254.500 278.300h13.500" stroke="#b8b8b8" stroke-width=".9"/>
<path d="M254.200 256.500h4.800v9.800l-2.400-1.800l-2.400 1.800z" fill="#d81820"/>
<path d="M251 258.500v25.500" stroke="#a0a0a0" stroke-width=".8"/>
</g>
<g>
<rect x="301.300" y="251.800" width="13.400" height="5" rx="1" fill="none" stroke="#8ea4c2" stroke-width="1.600"/>
<path d="M295.200 262h25.600l-.8 22.500a2.500 2.500 0 0 1 -2.500 2.500h-19a2.500 2.500 0 0 1 -2.500 -2.500z" fill="url(#gSteel)"/>
<path d="M299.500 264v20M305 264v20M311 264v20M316.500 264v20" stroke="#7890b2" stroke-width="2.200"/><path d="M301.200 264v20M306.700 264v20M312.700 264v20" stroke="#f0f4fa" stroke-width="1"/>
<rect x="292.800" y="255" width="30.400" height="7" rx="2" fill="url(#gSteel)"/><rect x="293.300" y="255.500" width="29.400" height="6" rx="1.800" fill="none" stroke="#7c94b6" stroke-width=".8"/>
</g>
<g>
<path d="M369 276l9.500 9" stroke="#6c7684" stroke-width="5" stroke-linecap="round"/><path d="M369.500 275l9 8.500" stroke="#c4ccd6" stroke-width="1.600" stroke-linecap="round"/>
<circle cx="359.700" cy="266.200" r="15.200" fill="#f4f6f8" stroke="#b4bcc6" stroke-width=".9"/>
<circle cx="359.700" cy="266.200" r="12.300" fill="url(#gLens)" stroke="#1c44b4" stroke-width=".6"/>
<ellipse cx="359.700" cy="262" rx="8.500" ry="5" fill="#a8b4fc" opacity=".55"/>
</g>
<g><polygon points="410.6,261.7 411.6,265.7 415.6,266.9 412.1,269.2 412.2,273.4 409.0,270.7 405.0,272.1 406.6,268.2 404.0,264.9 408.2,265.1" fill="#e8ffd8" stroke="#58e010" stroke-width="1.3" stroke-linejoin="round"/><polygon points="415.4,253.1 417.0,255.8 420.1,255.7 418.2,258.1 419.2,261.0 416.3,259.9 413.8,261.8 414.0,258.7 411.5,256.9 414.5,256.1" fill="#e0fbff" stroke="#18d4f4" stroke-width="1.3" stroke-linejoin="round"/><polygon points="426.5,253.4 427.1,255.3 429.1,255.7 427.5,257.0 427.7,259.0 426.1,257.8 424.2,258.7 424.8,256.7 423.4,255.2 425.5,255.2" fill="#fff0f0" stroke="#f88080" stroke-width="1.3" stroke-linejoin="round"/><path d="M418.500 266l18.500 19" stroke="#1c1c1c" stroke-width="3.400" stroke-linecap="butt"/><path d="M419.500 265.400l17.800 18.400" stroke="#787878" stroke-width="1" />
<path d="M418.300 265.800l4 4.100" stroke="#c8c8c8" stroke-width="3.600"/><path d="M418.300 265.800l1.300 1.300" stroke="#808080" stroke-width="3.600"/></g>
<g>
<circle cx="475.400" cy="269.500" r="16.800" fill="#dfe5ee" stroke="#c0c8d6" stroke-width="1"/>
<circle cx="475.400" cy="269.500" r="14.300" fill="url(#gInfo)" stroke="#2444c8" stroke-width="1.300"/>
<circle cx="475.700" cy="262.300" r="3" fill="#3a78ea"/>
<path d="M472 267.300h6.200v10.200h1.800v2h-8.500v-2h2.300v-8.200h-1.800z" fill="#2a4ce0"/>
</g>
<g>
<circle cx="552" cy="269.500" r="16.300" fill="#d4d8dc" stroke="#8a9096" stroke-width="1"/>
<circle cx="552" cy="269.500" r="14.300" fill="url(#gVir)" stroke="#0c6a06" stroke-width="1"/>
<g stroke="#88f050" stroke-width="1" fill="none"><path d="M552 257v3.500M552 278.500v3.500M539.500 269.500h3.500M561 269.500h3.500"/>
<path d="M548.500 266l-3-3.500M555.500 266l3-3.500M547.500 269.500h-4M556.500 269.500h4M548 273l-2.500 3.500M556 273l2.500 3.500" stroke-width="1.100"/></g>
<ellipse cx="552" cy="271.500" rx="4.400" ry="5" fill="#88f050"/><circle cx="552" cy="265.500" r="2.600" fill="#88f050"/><circle cx="552" cy="266.300" r="1.100" fill="#2cb810"/>
</g>
<g>
<path d="M634 279v7.500l8.500-7.500z" fill="#8ea6c8"/>
<rect x="614.300" y="254.300" width="31.400" height="26" rx="5.500" fill="url(#gBub)" stroke="#7c98c4" stroke-width="1"/>
<rect x="615.800" y="255.800" width="28.400" height="23" rx="4.500" fill="none" stroke="#e4ecf8" stroke-width="1" opacity=".8"/>
<path d="M621 261.500h19M621 266.500h19M621 271.500h10" stroke="#3c4a60" stroke-width="1.700"/>
</g>
<g>
<rect x="678" y="253" width="11" height="12" rx="1.500" fill="url(#gG)"/><rect x="689" y="253" width="11" height="12" rx="1.500" fill="url(#gB)"/><rect x="700" y="253" width="11" height="12" rx="1.500" fill="url(#gR)"/>
<rect x="679.300" y="256" width="8.600" height="2.300" fill="#ffd21e"/><rect x="690.300" y="256" width="8.600" height="2.300" fill="#ffd21e"/><rect x="701.300" y="256" width="8.600" height="2.300" fill="#ff9a1a"/>
<path d="M677 264l-4 13h4zM712 264l4 13h-4z" fill="#e8a070"/>
<rect x="677" y="264" width="35" height="22" fill="url(#gBox)"/>
<path d="M677 264h35l-3 9h-29z" fill="#fee8b0"/><path d="M694.500 273v13" stroke="#c8743c" stroke-width=".9"/>
</g></svg>
<span class="t" style="left:857.20px;top:617.00px;font-size:12px;line-height:16px;letter-spacing:-0.298px;color:#fff;text-shadow:0 1px 2px #000,0 0 2px #000,1px 1px 1px rgba(0,0,0,.8);">Screenshots Cabview</span>
<span class="t" style="left:2059.20px;top:30.00px;font-size:12px;line-height:16px;letter-spacing:-0.537px;color:#fff;text-shadow:0 1px 2px #000,0 0 2px #000,1px 1px 1px rgba(0,0,0,.8);">Fraps</span>
<span class="t" style="left:44.50px;top:203.00px;font-size:12px;line-height:16px;letter-spacing:-0.537px;color:#000;">TW_BR442_Cabview.rwp</span>
<span class="t" style="left:22.50px;top:228.00px;font-size:12px;line-height:16px;letter-spacing:-0.323px;color:#000;">Datei</span>
<span class="t" style="left:63.30px;top:228.00px;font-size:12px;line-height:16px;letter-spacing:-0.300px;color:#000;">Befehle</span>
<span class="t" style="left:116.30px;top:228.00px;font-size:12px;line-height:16px;letter-spacing:-0.553px;color:#000;">Extras</span>
<span class="t" style="left:161.30px;top:228.00px;font-size:12px;line-height:16px;letter-spacing:-0.170px;color:#000;">Favoriten</span>
<span class="t" style="left:224.20px;top:228.00px;font-size:12px;line-height:16px;letter-spacing:0.075px;color:#000;">Optionen</span>
<span class="t" style="left:288.10px;top:228.00px;font-size:12px;line-height:16px;letter-spacing:0.217px;color:#000;">Hilfe</span>
<span class="t" style="left:31.70px;top:288.00px;font-size:12px;line-height:16px;letter-spacing:0.028px;color:#000;">Hinzufügen</span>
<span class="t" style="left:104.00px;top:288.00px;font-size:12px;line-height:16px;letter-spacing:-0.157px;color:#000;">Entp. nach</span>
<span class="t" style="left:176.30px;top:288.00px;font-size:12px;line-height:16px;letter-spacing:-0.527px;color:#000;">Testen</span>
<span class="t" style="left:226.30px;top:288.00px;font-size:12px;line-height:16px;letter-spacing:-0.218px;color:#000;">Anzeigen</span>
<span class="t" style="left:286.40px;top:288.00px;font-size:12px;line-height:16px;letter-spacing:-0.354px;color:#000;">Löschen</span>
<span class="t" style="left:343.00px;top:288.00px;font-size:12px;line-height:16px;letter-spacing:-0.384px;color:#000;">Suchen</span>
<span class="t" style="left:396.40px;top:288.00px;font-size:12px;line-height:16px;letter-spacing:-0.221px;color:#000;">Assistent</span>
<span class="t" style="left:465.00px;top:288.00px;font-size:12px;line-height:16px;letter-spacing:0.146px;color:#000;">Info</span>
<span class="t" style="left:517.00px;top:288.00px;font-size:12px;line-height:16px;letter-spacing:0.092px;color:#000;">Virenprüfung</span>
<span class="t" style="left:598.30px;top:288.00px;font-size:12px;line-height:16px;letter-spacing:0.074px;color:#000;">Kommentar</span>
<span class="t" style="left:684.00px;top:288.00px;font-size:12px;line-height:16px;letter-spacing:-1.200px;color:#000;">SFX</span>
<span class="t" style="left:23.40px;top:344.00px;font-size:12px;line-height:16px;letter-spacing:-0.629px;color:#000;">Name</span>
<span class="t" style="left:178.80px;top:344.00px;font-size:12px;line-height:16px;letter-spacing:-0.403px;color:#000;">Größe</span>
<span class="t" style="left:247.46px;top:344.00px;font-size:12px;line-height:16px;letter-spacing:-0.243px;color:#000;">Gepackt</span>
<span class="t" style="left:303.50px;top:344.00px;font-size:12px;line-height:16px;letter-spacing:-0.715px;color:#000;">Typ</span>
<span class="t" style="left:423.60px;top:344.00px;font-size:12px;line-height:16px;letter-spacing:-0.331px;color:#000;">Geändert</span>
<span class="t" style="left:523.40px;top:344.00px;font-size:12px;line-height:16px;letter-spacing:-0.992px;color:#000;">CRC32</span>
<span class="t" style="left:39.60px;top:366.00px;font-size:12px;line-height:16px;letter-spacing:-0.336px;color:#000;">..</span>
<span class="t" style="left:303.50px;top:366.00px;font-size:12px;line-height:16px;letter-spacing:-0.128px;color:#000;">Dateiordner</span>
<span class="t" style="left:39.60px;top:385.00px;font-size:12px;line-height:16px;letter-spacing:-0.266px;color:#fff;">Cab_Camera.bin</span>
<span class="t" style="left:183.99px;top:385.00px;font-size:12px;line-height:16px;letter-spacing:-0.706px;color:#fff;">1.132</span>
<span class="t" style="left:272.36px;top:385.00px;font-size:12px;line-height:16px;letter-spacing:-0.844px;color:#fff;">513</span>
<span class="t" style="left:303.50px;top:385.00px;font-size:12px;line-height:16px;letter-spacing:-0.168px;color:#fff;">BIN-Datei</span>
<span class="t" style="left:423.60px;top:385.00px;font-size:12px;line-height:16px;letter-spacing:-0.626px;color:#fff;">25.07.2014 21:55</span>
<span class="t" style="left:523.40px;top:385.00px;font-size:12px;line-height:16px;letter-spacing:-0.890px;color:#fff;">BE660B1A</span>
<span class="t" style="left:61.20px;top:511.00px;font-size:12px;line-height:16px;letter-spacing:-0.244px;color:#000;">Ausgewählt sind 1 Datei, 1.132 Bytes</span>
<span class="t" style="left:541.00px;top:511.00px;font-size:12px;line-height:16px;letter-spacing:-0.326px;color:#000;">Insgesamt 1 Datei, 1.132 Bytes</span>
<span class="t" style="left:1129.40px;top:72.00px;font-size:12px;line-height:16px;letter-spacing:-0.330px;color:#9b9b9b;">CabView</span>
<span class="t" style="left:1034.40px;top:99.00px;font-size:12px;line-height:16px;letter-spacing:-0.263px;color:#fff;">Datei</span>
<span class="t" style="left:1090.40px;top:99.00px;font-size:12px;line-height:16px;letter-spacing:-0.409px;color:#222;">Start</span>
<span class="t" style="left:1143.40px;top:99.00px;font-size:12px;line-height:16px;letter-spacing:-0.294px;color:#222;">Freigeben</span>
<span class="t" style="left:1224.00px;top:99.00px;font-size:12px;line-height:16px;letter-spacing:-0.208px;color:#222;">Ansicht</span>
<span class="t" style="left:1166.10px;top:131.00px;font-size:12px;line-height:16px;letter-spacing:-0.519px;color:#000;">Assets</span>
<span class="t" style="left:1222.30px;top:131.00px;font-size:12px;line-height:16px;letter-spacing:-1.200px;color:#000;">DTG</span>
<span class="t" style="left:1265.30px;top:131.00px;font-size:12px;line-height:16px;letter-spacing:-0.793px;color:#000;">BR442Pack01</span>
<span class="t" style="left:1357.30px;top:131.00px;font-size:12px;line-height:16px;letter-spacing:-0.390px;color:#000;">RailVehicles</span>
<span class="t" style="left:1440.90px;top:131.00px;font-size:12px;line-height:16px;letter-spacing:-0.255px;color:#000;">Electric</span>
<span class="t" style="left:1502.10px;top:131.00px;font-size:12px;line-height:16px;letter-spacing:-0.272px;color:#000;">Talent2</span>
<span class="t" style="left:1562.30px;top:131.00px;font-size:12px;line-height:16px;letter-spacing:-0.288px;color:#000;">CabView</span>
<span class="t" style="left:1831.40px;top:131.00px;font-size:12px;line-height:16px;letter-spacing:-0.037px;color:#6d6d6d;">&quot;CabView&quot; durchsuchen</span>
<span class="t" style="left:1198.30px;top:166.00px;font-size:12px;line-height:16px;letter-spacing:-0.079px;color:#4c607a;">Name</span>
<span class="t" style="left:1513.20px;top:166.00px;font-size:12px;line-height:16px;letter-spacing:0.064px;color:#4c607a;">Änderungsdatum</span>
<span class="t" style="left:1657.60px;top:166.00px;font-size:12px;line-height:16px;letter-spacing:-0.781px;color:#4c607a;">Typ</span>
<span class="t" style="left:1777.30px;top:166.00px;font-size:12px;line-height:16px;letter-spacing:-0.463px;color:#4c607a;">Größe</span>
<span class="t" style="left:1065.20px;top:181.00px;font-size:12px;line-height:16px;letter-spacing:-0.023px;color:#000;">Schnellzugriff</span>
<span class="t" style="left:1065.20px;top:213.00px;font-size:12px;line-height:16px;letter-spacing:-0.198px;color:#000;">OneDrive</span>
<span class="t" style="left:1065.20px;top:245.00px;font-size:12px;line-height:16px;letter-spacing:-0.543px;color:#000;">Dieser PC</span>
<span class="t" style="left:1065.20px;top:277.00px;font-size:12px;line-height:16px;letter-spacing:-0.164px;color:#000;">Netzwerk</span>
<span class="t" style="left:1219.00px;top:195.00px;font-size:12px;line-height:16px;letter-spacing:-0.332px;color:#000;">Textures</span>
<span class="t" style="left:1513.20px;top:195.00px;font-size:12px;line-height:16px;letter-spacing:-0.558px;color:#6d6d6d;">25.06.2021 11:08</span>
<span class="t" style="left:1657.60px;top:195.00px;font-size:12px;line-height:16px;letter-spacing:-0.137px;color:#6d6d6d;">Dateiordner</span>
<span class="t" style="left:1219.00px;top:216.00px;font-size:12px;line-height:16px;letter-spacing:-0.367px;color:#000;">AFB_bug_needle.ban</span>
<span class="t" style="left:1513.20px;top:216.00px;font-size:12px;line-height:16px;letter-spacing:-0.614px;color:#6d6d6d;">19.02.2017 13:48</span>
<span class="t" style="left:1657.60px;top:216.00px;font-size:12px;line-height:16px;letter-spacing:-0.188px;color:#6d6d6d;">BAN-Datei</span>
<span class="t" style="left:1819.00px;top:216.00px;font-size:12px;line-height:16px;letter-spacing:-0.804px;color:#6d6d6d;">2 KB</span>
<span class="t" style="left:1219.00px;top:237.00px;font-size:12px;line-height:16px;letter-spacing:-0.492px;color:#000;">AFBSet.ban</span>
<span class="t" style="left:1513.20px;top:237.00px;font-size:12px;line-height:16px;letter-spacing:-0.614px;color:#6d6d6d;">19.02.2017 13:48</span>
<span class="t" style="left:1657.60px;top:237.00px;font-size:12px;line-height:16px;letter-spacing:-0.188px;color:#6d6d6d;">BAN-Datei</span>
<span class="t" style="left:1819.00px;top:237.00px;font-size:12px;line-height:16px;letter-spacing:-0.804px;color:#6d6d6d;">1 KB</span>
<span class="t" style="left:1219.00px;top:258.00px;font-size:12px;line-height:16px;letter-spacing:-0.115px;color:#000;">AFBtoggle.ban</span>
<span class="t" style="left:1513.20px;top:258.00px;font-size:12px;line-height:16px;letter-spacing:-0.614px;color:#6d6d6d;">19.02.2017 13:48</span>
<span class="t" style="left:1657.60px;top:258.00px;font-size:12px;line-height:16px;letter-spacing:-0.188px;color:#6d6d6d;">BAN-Datei</span>
<span class="t" style="left:1819.00px;top:258.00px;font-size:12px;line-height:16px;letter-spacing:-0.804px;color:#6d6d6d;">1 KB</span>
<span class="t" style="left:1219.00px;top:279.00px;font-size:12px;line-height:16px;letter-spacing:-0.126px;color:#000;">amps_bug.ban</span>
<span class="t" style="left:1513.20px;top:279.00px;font-size:12px;line-height:16px;letter-spacing:-0.614px;color:#6d6d6d;">19.02.2017 13:48</span>
<span class="t" style="left:1657.60px;top:279.00px;font-size:12px;line-height:16px;letter-spacing:-0.188px;color:#6d6d6d;">BAN-Datei</span>
<span class="t" style="left:1819.00px;top:279.00px;font-size:12px;line-height:16px;letter-spacing:-0.804px;color:#6d6d6d;">1 KB</span>
<span class="t" style="left:1219.00px;top:300.00px;font-size:12px;line-height:16px;letter-spacing:-0.267px;color:#000;">BlueBarZug1.ban</span>
<span class="t" style="left:1513.20px;top:300.00px;font-size:12px;line-height:16px;letter-spacing:-0.614px;color:#6d6d6d;">19.02.2017 13:48</span>
<span class="t" style="left:1657.60px;top:300.00px;font-size:12px;line-height:16px;letter-spacing:-0.188px;color:#6d6d6d;">BAN-Datei</span>
<span class="t" style="left:1819.00px;top:300.00px;font-size:12px;line-height:16px;letter-spacing:-0.804px;color:#6d6d6d;">1 KB</span>
<span class="t" style="left:1219.00px;top:321.00px;font-size:12px;line-height:16px;letter-spacing:-0.267px;color:#000;">BlueBarZug2.ban</span>
<span class="t" style="left:1513.20px;top:321.00px;font-size:12px;line-height:16px;letter-spacing:-0.614px;color:#6d6d6d;">19.02.2017 13:48</span>
<span class="t" style="left:1657.60px;top:321.00px;font-size:12px;line-height:16px;letter-spacing:-0.188px;color:#6d6d6d;">BAN-Datei</span>
<span class="t" style="left:1819.00px;top:321.00px;font-size:12px;line-height:16px;letter-spacing:-0.804px;color:#6d6d6d;">1 KB</span>
<span class="t" style="left:1219.00px;top:342.00px;font-size:12px;line-height:16px;letter-spacing:-0.345px;color:#000;">Brake.ban</span>
<span class="t" style="left:1513.20px;top:342.00px;font-size:12px;line-height:16px;letter-spacing:-0.614px;color:#6d6d6d;">19.02.2017 13:48</span>
<span class="t" style="left:1657.60px;top:342.00px;font-size:12px;line-height:16px;letter-spacing:-0.188px;color:#6d6d6d;">BAN-Datei</span>
<span class="t" style="left:1819.00px;top:342.00px;font-size:12px;line-height:16px;letter-spacing:-0.804px;color:#6d6d6d;">1 KB</span>
<span class="t" style="left:1219.00px;top:363.00px;font-size:12px;line-height:16px;letter-spacing:-0.311px;color:#000;">Brake_blue_new.ban</span>
<span class="t" style="left:1513.20px;top:363.00px;font-size:12px;line-height:16px;letter-spacing:-0.614px;color:#6d6d6d;">19.02.2017 13:48</span>
<span class="t" style="left:1657.60px;top:363.00px;font-size:12px;line-height:16px;letter-spacing:-0.188px;color:#6d6d6d;">BAN-Datei</span>
<span class="t" style="left:1819.00px;top:363.00px;font-size:12px;line-height:16px;letter-spacing:-0.804px;color:#6d6d6d;">1 KB</span>
<span class="t" style="left:1219.00px;top:384.00px;font-size:12px;line-height:16px;letter-spacing:-0.270px;color:#000;">Brakepipepressure.ban</span>
<span class="t" style="left:1513.20px;top:384.00px;font-size:12px;line-height:16px;letter-spacing:-0.614px;color:#6d6d6d;">19.02.2017 13:48</span>
<span class="t" style="left:1657.60px;top:384.00px;font-size:12px;line-height:16px;letter-spacing:-0.188px;color:#6d6d6d;">BAN-Datei</span>
<span class="t" style="left:1819.00px;top:384.00px;font-size:12px;line-height:16px;letter-spacing:-0.804px;color:#6d6d6d;">1 KB</span>
<span class="t" style="left:1219.00px;top:405.00px;font-size:12px;line-height:16px;letter-spacing:-0.194px;color:#000;">BrownBarZug1.ban</span>
<span class="t" style="left:1513.20px;top:405.00px;font-size:12px;line-height:16px;letter-spacing:-0.614px;color:#6d6d6d;">19.02.2017 13:48</span>
<span class="t" style="left:1657.60px;top:405.00px;font-size:12px;line-height:16px;letter-spacing:-0.188px;color:#6d6d6d;">BAN-Datei</span>
<span class="t" style="left:1819.00px;top:405.00px;font-size:12px;line-height:16px;letter-spacing:-0.804px;color:#6d6d6d;">1 KB</span>
<span class="t" style="left:1219.00px;top:426.00px;font-size:12px;line-height:16px;letter-spacing:-0.194px;color:#000;">BrownBarZug2.ban</span>
<span class="t" style="left:1513.20px;top:426.00px;font-size:12px;line-height:16px;letter-spacing:-0.614px;color:#6d6d6d;">19.02.2017 13:48</span>
<span class="t" style="left:1657.60px;top:426.00px;font-size:12px;line-height:16px;letter-spacing:-0.188px;color:#6d6d6d;">BAN-Datei</span>
<span class="t" style="left:1819.00px;top:426.00px;font-size:12px;line-height:16px;letter-spacing:-0.804px;color:#6d6d6d;">1 KB</span>
<span class="t" style="left:1219.00px;top:447.00px;font-size:12px;line-height:16px;letter-spacing:-0.572px;color:#000;">Cab</span>
<span class="t" style="left:1513.20px;top:447.00px;font-size:12px;line-height:16px;letter-spacing:-0.614px;color:#6d6d6d;">19.02.2017 13:48</span>
<span class="t" style="left:1657.60px;top:447.00px;font-size:12px;line-height:16px;letter-spacing:-0.168px;color:#6d6d6d;">BIN-Datei</span>
<span class="t" style="left:1819.00px;top:447.00px;font-size:12px;line-height:16px;letter-spacing:-0.804px;color:#6d6d6d;">3 KB</span>
<span class="t" style="left:1219.00px;top:468.00px;font-size:12px;line-height:16px;letter-spacing:-0.546px;color:#000;">Cab.GeoPcDx</span>
<span class="t" style="left:1513.20px;top:468.00px;font-size:12px;line-height:16px;letter-spacing:-0.614px;color:#6d6d6d;">19.02.2017 13:48</span>
<span class="t" style="left:1657.60px;top:468.00px;font-size:12px;line-height:16px;letter-spacing:-0.579px;color:#6d6d6d;">GEOPCDX-Datei</span>
<span class="t" style="left:1796.62px;top:468.00px;font-size:12px;line-height:16px;letter-spacing:-0.484px;color:#6d6d6d;">3.428 KB</span>
<span class="t" style="left:1219.00px;top:489.00px;font-size:12px;line-height:16px;letter-spacing:-0.497px;color:#000;">Cab_Camera</span>
<span class="t" style="left:1513.20px;top:489.00px;font-size:12px;line-height:16px;letter-spacing:-0.614px;color:#6d6d6d;">25.07.2014 21:55</span>
<span class="t" style="left:1657.60px;top:489.00px;font-size:12px;line-height:16px;letter-spacing:-0.168px;color:#6d6d6d;">BIN-Datei</span>
<span class="t" style="left:1819.00px;top:489.00px;font-size:12px;line-height:16px;letter-spacing:-0.804px;color:#6d6d6d;">2 KB</span>
<span class="t" style="left:1219.00px;top:510.00px;font-size:12px;line-height:16px;letter-spacing:-0.102px;color:#000;">CabLightsSwitch.ban</span>
<span class="t" style="left:1513.20px;top:510.00px;font-size:12px;line-height:16px;letter-spacing:-0.614px;color:#6d6d6d;">19.02.2017 13:48</span>
<span class="t" style="left:1657.60px;top:510.00px;font-size:12px;line-height:16px;letter-spacing:-0.188px;color:#6d6d6d;">BAN-Datei</span>
<span class="t" style="left:1819.00px;top:510.00px;font-size:12px;line-height:16px;letter-spacing:-0.804px;color:#6d6d6d;">1 KB</span>
<span class="t" style="left:1219.00px;top:531.00px;font-size:12px;line-height:16px;letter-spacing:-0.136px;color:#000;">DoorsCloseLight.ban</span>
<span class="t" style="left:1513.20px;top:531.00px;font-size:12px;line-height:16px;letter-spacing:-0.614px;color:#6d6d6d;">19.02.2017 13:48</span>
<span class="t" style="left:1657.60px;top:531.00px;font-size:12px;line-height:16px;letter-spacing:-0.188px;color:#6d6d6d;">BAN-Datei</span>
<span class="t" style="left:1819.00px;top:531.00px;font-size:12px;line-height:16px;letter-spacing:-0.804px;color:#6d6d6d;">1 KB</span>
<span class="t" style="left:1219.00px;top:552.00px;font-size:12px;line-height:16px;letter-spacing:-0.127px;color:#000;">Emergency.ban</span>
<span class="t" style="left:1513.20px;top:552.00px;font-size:12px;line-height:16px;letter-spacing:-0.614px;color:#6d6d6d;">19.02.2017 13:48</span>
<span class="t" style="left:1657.60px;top:552.00px;font-size:12px;line-height:16px;letter-spacing:-0.188px;color:#6d6d6d;">BAN-Datei</span>
<span class="t" style="left:1819.00px;top:552.00px;font-size:12px;line-height:16px;letter-spacing:-0.804px;color:#6d6d6d;">1 KB</span>
<span class="t" style="left:1219.00px;top:573.00px;font-size:12px;line-height:16px;letter-spacing:-0.108px;color:#000;">force_blue.ban</span>
<span class="t" style="left:1513.20px;top:573.00px;font-size:12px;line-height:16px;letter-spacing:-0.614px;color:#6d6d6d;">19.02.2017 13:48</span>
<span class="t" style="left:1657.60px;top:573.00px;font-size:12px;line-height:16px;letter-spacing:-0.188px;color:#6d6d6d;">BAN-Datei</span>
<span class="t" style="left:1819.00px;top:573.00px;font-size:12px;line-height:16px;letter-spacing:-0.804px;color:#6d6d6d;">1 KB</span>
<span class="t" style="left:1219.00px;top:594.00px;font-size:12px;line-height:16px;letter-spacing:-0.384px;color:#000;">Head_Out_Camera</span>
<span class="t" style="left:1513.20px;top:594.00px;font-size:12px;line-height:16px;letter-spacing:-0.614px;color:#6d6d6d;">19.02.2017 13:48</span>
<span class="t" style="left:1657.60px;top:594.00px;font-size:12px;line-height:16px;letter-spacing:-0.168px;color:#6d6d6d;">BIN-Datei</span>
<span class="t" style="left:1819.00px;top:594.00px;font-size:12px;line-height:16px;letter-spacing:-0.804px;color:#6d6d6d;">1 KB</span>
<span class="t" style="left:1219.00px;top:615.00px;font-size:12px;line-height:16px;letter-spacing:-0.054px;color:#000;">HeadLightSwitch.ban</span>
<span class="t" style="left:1513.20px;top:615.00px;font-size:12px;line-height:16px;letter-spacing:-0.614px;color:#6d6d6d;">19.02.2017 13:48</span>
<span class="t" style="left:1657.60px;top:615.00px;font-size:12px;line-height:16px;letter-spacing:-0.188px;color:#6d6d6d;">BAN-Datei</span>
<span class="t" style="left:1819.00px;top:615.00px;font-size:12px;line-height:16px;letter-spacing:-0.804px;color:#6d6d6d;">1 KB</span>
<span class="t" style="left:2129.60px;top:97.16px;font-size:13px;line-height:17px;letter-spacing:-0.300px;color:#fff;font-weight:bold;">?</span>
<div class="a" style="left:1020px;top:628px;width:1119px;height:23px;background:#fff;"></div>
<div class="a" style="left:1108px;top:634px;width:1px;height:12px;background:#e6e6e6;"></div>
<div class="a" style="left:2096px;top:628px;width:22px;height:23px;box-sizing:border-box;background:#cce8f6;border:1px solid #26a0da;"></div>
<svg style="left:2096px;top:628px" width="44" height="23" viewBox="0 0 44 23">
<g fill="#fff" stroke="#8a8a8a" stroke-width=".8"><rect x="4.500" y="5.500" width="4" height="3.500"/><rect x="4.500" y="9.500" width="4" height="3.500"/><rect x="4.500" y="13.500" width="4" height="3.500"/></g>
<rect x="6" y="6.800" width="1" height="1" fill="#3a7a3a"/><rect x="6" y="10.800" width="1" height="1" fill="#3a7ae0"/><rect x="6" y="14.800" width="1" height="1" fill="#e03a3a"/>
<path d="M10 7.500h4M16 7.500h4M10 11.500h4M16 11.500h4M10 15.500h4M16 15.500h4" stroke="#6e6e6e" stroke-width="1"/>
<rect x="26.500" y="5.500" width="13" height="10" fill="#fff" stroke="#8a8a8a" stroke-width="1"/><rect x="28" y="7" width="10" height="7" fill="#3f8fd8"/><path d="M28 14v-3l4-2l6 3v2z" fill="#2a6a4a"/><path d="M28 7h10v2h-10z" fill="#7fc0f0"/>
</svg>
<span class="t" style="left:1034.00px;top:632.00px;font-size:12px;line-height:16px;letter-spacing:-0.308px;color:#1b2a40;">41 Elemente</span>
</body></html>
